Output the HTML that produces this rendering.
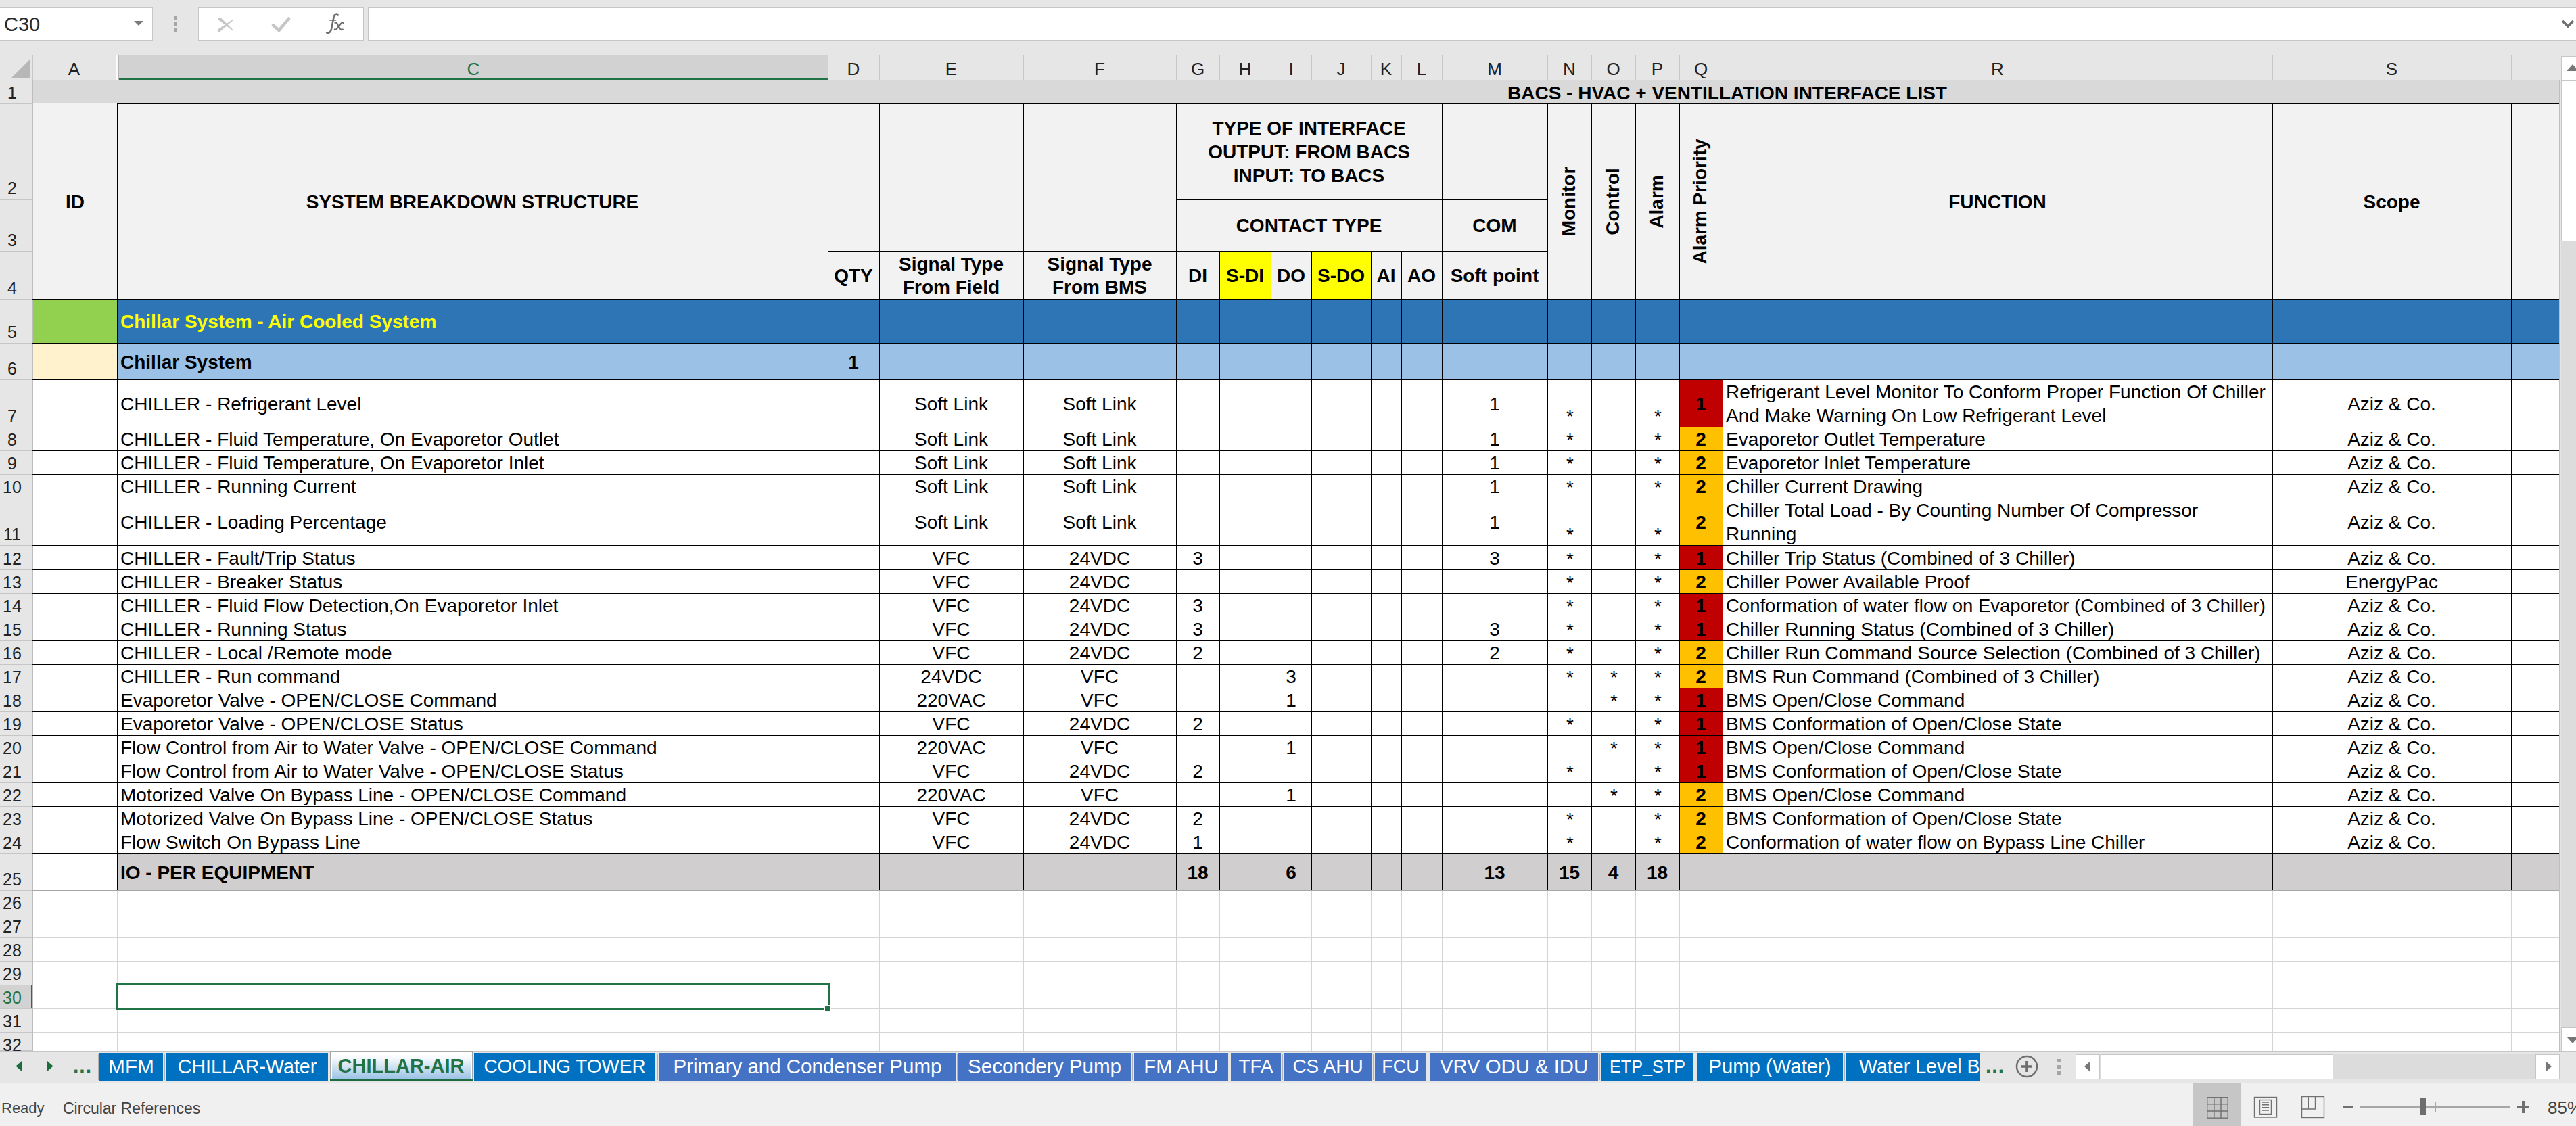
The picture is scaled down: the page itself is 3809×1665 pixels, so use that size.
<!DOCTYPE html><html><head><meta charset="utf-8"><style>
html,body{margin:0;padding:0;}
body{width:3809px;height:1665px;overflow:hidden;position:relative;background:#e6e6e6;font-family:'Liberation Sans', sans-serif;}
</style></head><body>
<div style="position:absolute;left:-1px;top:11px;width:227px;height:49px;background:#fff;border:1px solid #c6c6c6;box-sizing:border-box;"></div>
<div style="position:absolute;left:6px;top:15px;font-family:'Liberation Sans', sans-serif;font-size:29px;line-height:42px;color:#2b2b2b;">C30</div>
<svg style="position:absolute;left:198px;top:31px" width="15" height="8"><path d="M0 0 L14 0 L7 7 Z" fill="#7a7a7a"/></svg>
<div style="position:absolute;left:257px;top:24px;width:5px;height:5px;background:#a6a6a6;"></div>
<div style="position:absolute;left:257px;top:33px;width:5px;height:5px;background:#a6a6a6;"></div>
<div style="position:absolute;left:257px;top:42px;width:5px;height:5px;background:#a6a6a6;"></div>
<div style="position:absolute;left:293px;top:11px;width:245px;height:49px;background:#fff;border:1px solid #c6c6c6;box-sizing:border-box;"></div>
<svg style="position:absolute;left:320px;top:24px" width="30" height="24"><path d="M3.52 5.69 L6.48 2.31 L25.33 21.12 L24.67 21.88 Z M24.7 4.6 L25.3 5.4 L5.36 22.79 L2.64 19.21 Z" fill="#c6c6c6"/><circle cx="5" cy="4" r="2.25" fill="#c6c6c6"/><circle cx="4" cy="21" r="2.25" fill="#c6c6c6"/></svg>
<svg style="position:absolute;left:400px;top:24px" width="32" height="24"><path d="M4 13.5 L12.5 21 L27 3.5" stroke="#c6c6c6" stroke-width="4.6" stroke-linecap="round" stroke-linejoin="miter" fill="none"/></svg>
<svg style="position:absolute;left:480px;top:18px" width="34" height="34"><g fill="none" stroke="#6e6e6e" stroke-linecap="round"><path d="M19.5 3.5 C18 2 15 2.5 13.8 6 L10 25 C9 30 6 31.5 3.2 30.2" stroke-width="2.6"/><path d="M7.8 11.8 H16.5" stroke-width="1.8"/><path d="M15.5 16 C17 15 18 15.5 19 18 L23 24.5 C24 26.5 25.5 26.5 26.8 25.5" stroke-width="2.2"/><path d="M27.5 15.8 C26 14.8 25 15.5 23.5 17.5 L18.5 24 C17.3 25.8 16 26.2 14.8 25.5" stroke-width="2.2"/></g></svg>
<div style="position:absolute;left:544px;top:11px;width:3300px;height:49px;background:#fff;border:1px solid #c6c6c6;box-sizing:border-box;"></div>
<svg style="position:absolute;left:3787px;top:29px" width="20" height="13"><path d="M2 2 L10 10 L18 2" stroke="#6e6e6e" stroke-width="3.5" fill="none"/></svg>
<div style="position:absolute;left:48px;top:118px;width:3736px;height:1436px;background:#fff;"></div>
<div style="position:absolute;left:48px;top:153px;width:3736px;height:1px;background:#d4d4d4;"></div>
<div style="position:absolute;left:48px;top:294px;width:3736px;height:1px;background:#d4d4d4;"></div>
<div style="position:absolute;left:48px;top:371px;width:3736px;height:1px;background:#d4d4d4;"></div>
<div style="position:absolute;left:48px;top:442px;width:3736px;height:1px;background:#d4d4d4;"></div>
<div style="position:absolute;left:48px;top:507px;width:3736px;height:1px;background:#d4d4d4;"></div>
<div style="position:absolute;left:48px;top:561px;width:3736px;height:1px;background:#d4d4d4;"></div>
<div style="position:absolute;left:48px;top:631px;width:3736px;height:1px;background:#d4d4d4;"></div>
<div style="position:absolute;left:48px;top:666px;width:3736px;height:1px;background:#d4d4d4;"></div>
<div style="position:absolute;left:48px;top:701px;width:3736px;height:1px;background:#d4d4d4;"></div>
<div style="position:absolute;left:48px;top:736px;width:3736px;height:1px;background:#d4d4d4;"></div>
<div style="position:absolute;left:48px;top:806px;width:3736px;height:1px;background:#d4d4d4;"></div>
<div style="position:absolute;left:48px;top:842px;width:3736px;height:1px;background:#d4d4d4;"></div>
<div style="position:absolute;left:48px;top:877px;width:3736px;height:1px;background:#d4d4d4;"></div>
<div style="position:absolute;left:48px;top:912px;width:3736px;height:1px;background:#d4d4d4;"></div>
<div style="position:absolute;left:48px;top:947px;width:3736px;height:1px;background:#d4d4d4;"></div>
<div style="position:absolute;left:48px;top:982px;width:3736px;height:1px;background:#d4d4d4;"></div>
<div style="position:absolute;left:48px;top:1017px;width:3736px;height:1px;background:#d4d4d4;"></div>
<div style="position:absolute;left:48px;top:1052px;width:3736px;height:1px;background:#d4d4d4;"></div>
<div style="position:absolute;left:48px;top:1087px;width:3736px;height:1px;background:#d4d4d4;"></div>
<div style="position:absolute;left:48px;top:1122px;width:3736px;height:1px;background:#d4d4d4;"></div>
<div style="position:absolute;left:48px;top:1157px;width:3736px;height:1px;background:#d4d4d4;"></div>
<div style="position:absolute;left:48px;top:1192px;width:3736px;height:1px;background:#d4d4d4;"></div>
<div style="position:absolute;left:48px;top:1227px;width:3736px;height:1px;background:#d4d4d4;"></div>
<div style="position:absolute;left:48px;top:1262px;width:3736px;height:1px;background:#d4d4d4;"></div>
<div style="position:absolute;left:48px;top:1316px;width:3736px;height:1px;background:#d4d4d4;"></div>
<div style="position:absolute;left:48px;top:1351px;width:3736px;height:1px;background:#d4d4d4;"></div>
<div style="position:absolute;left:48px;top:1386px;width:3736px;height:1px;background:#d4d4d4;"></div>
<div style="position:absolute;left:48px;top:1421px;width:3736px;height:1px;background:#d4d4d4;"></div>
<div style="position:absolute;left:48px;top:1456px;width:3736px;height:1px;background:#d4d4d4;"></div>
<div style="position:absolute;left:48px;top:1491px;width:3736px;height:1px;background:#d4d4d4;"></div>
<div style="position:absolute;left:48px;top:1526px;width:3736px;height:1px;background:#d4d4d4;"></div>
<div style="position:absolute;left:48px;top:1561px;width:3736px;height:1px;background:#d4d4d4;"></div>
<div style="position:absolute;left:173px;top:118px;width:1px;height:1436px;background:#d4d4d4;"></div>
<div style="position:absolute;left:1224px;top:118px;width:1px;height:1436px;background:#d4d4d4;"></div>
<div style="position:absolute;left:1300px;top:118px;width:1px;height:1436px;background:#d4d4d4;"></div>
<div style="position:absolute;left:1513px;top:118px;width:1px;height:1436px;background:#d4d4d4;"></div>
<div style="position:absolute;left:1739px;top:118px;width:1px;height:1436px;background:#d4d4d4;"></div>
<div style="position:absolute;left:1803px;top:118px;width:1px;height:1436px;background:#d4d4d4;"></div>
<div style="position:absolute;left:1879px;top:118px;width:1px;height:1436px;background:#d4d4d4;"></div>
<div style="position:absolute;left:1939px;top:118px;width:1px;height:1436px;background:#d4d4d4;"></div>
<div style="position:absolute;left:2027px;top:118px;width:1px;height:1436px;background:#d4d4d4;"></div>
<div style="position:absolute;left:2072px;top:118px;width:1px;height:1436px;background:#d4d4d4;"></div>
<div style="position:absolute;left:2132px;top:118px;width:1px;height:1436px;background:#d4d4d4;"></div>
<div style="position:absolute;left:2288px;top:118px;width:1px;height:1436px;background:#d4d4d4;"></div>
<div style="position:absolute;left:2353px;top:118px;width:1px;height:1436px;background:#d4d4d4;"></div>
<div style="position:absolute;left:2418px;top:118px;width:1px;height:1436px;background:#d4d4d4;"></div>
<div style="position:absolute;left:2483px;top:118px;width:1px;height:1436px;background:#d4d4d4;"></div>
<div style="position:absolute;left:2547px;top:118px;width:1px;height:1436px;background:#d4d4d4;"></div>
<div style="position:absolute;left:3360px;top:118px;width:1px;height:1436px;background:#d4d4d4;"></div>
<div style="position:absolute;left:3713px;top:118px;width:1px;height:1436px;background:#d4d4d4;"></div>
<div style="position:absolute;left:0px;top:82px;width:3784px;height:36px;background:#e6e6e6;"></div>
<svg style="position:absolute;left:16px;top:86px" width="30" height="30"><path d="M29 1 L29 29 L1 29 Z" fill="#b7b7b7"/></svg>
<div style="position:absolute;left:48px;top:82px;width:1px;height:36px;background:#c6c6c6;"></div>
<div style="position:absolute;left:48px;top:84px;width:123px;height:34px;overflow:hidden;text-align:center;font-family:'Liberation Sans', sans-serif;font-size:26px;line-height:36px;color:#222;">A</div>
<div style="position:absolute;left:171px;top:82px;width:1px;height:36px;background:#b4b4b4;"></div>
<div style="position:absolute;left:176px;top:82px;width:1048px;height:36px;background:#d2d2d2;"></div>
<div style="position:absolute;left:176px;top:116px;width:1048px;height:3px;background:#217346;"></div>
<div style="position:absolute;left:176px;top:84px;width:1048px;height:34px;overflow:hidden;text-align:center;font-family:'Liberation Sans', sans-serif;font-size:26px;line-height:36px;color:#217346;">C</div>
<div style="position:absolute;left:1224px;top:82px;width:1px;height:36px;background:#c6c6c6;"></div>
<div style="position:absolute;left:1224px;top:84px;width:76px;height:34px;overflow:hidden;text-align:center;font-family:'Liberation Sans', sans-serif;font-size:26px;line-height:36px;color:#222;">D</div>
<div style="position:absolute;left:1300px;top:82px;width:1px;height:36px;background:#c6c6c6;"></div>
<div style="position:absolute;left:1300px;top:84px;width:213px;height:34px;overflow:hidden;text-align:center;font-family:'Liberation Sans', sans-serif;font-size:26px;line-height:36px;color:#222;">E</div>
<div style="position:absolute;left:1513px;top:82px;width:1px;height:36px;background:#c6c6c6;"></div>
<div style="position:absolute;left:1513px;top:84px;width:226px;height:34px;overflow:hidden;text-align:center;font-family:'Liberation Sans', sans-serif;font-size:26px;line-height:36px;color:#222;">F</div>
<div style="position:absolute;left:1739px;top:82px;width:1px;height:36px;background:#c6c6c6;"></div>
<div style="position:absolute;left:1739px;top:84px;width:64px;height:34px;overflow:hidden;text-align:center;font-family:'Liberation Sans', sans-serif;font-size:26px;line-height:36px;color:#222;">G</div>
<div style="position:absolute;left:1803px;top:82px;width:1px;height:36px;background:#c6c6c6;"></div>
<div style="position:absolute;left:1803px;top:84px;width:76px;height:34px;overflow:hidden;text-align:center;font-family:'Liberation Sans', sans-serif;font-size:26px;line-height:36px;color:#222;">H</div>
<div style="position:absolute;left:1879px;top:82px;width:1px;height:36px;background:#c6c6c6;"></div>
<div style="position:absolute;left:1879px;top:84px;width:60px;height:34px;overflow:hidden;text-align:center;font-family:'Liberation Sans', sans-serif;font-size:26px;line-height:36px;color:#222;">I</div>
<div style="position:absolute;left:1939px;top:82px;width:1px;height:36px;background:#c6c6c6;"></div>
<div style="position:absolute;left:1939px;top:84px;width:88px;height:34px;overflow:hidden;text-align:center;font-family:'Liberation Sans', sans-serif;font-size:26px;line-height:36px;color:#222;">J</div>
<div style="position:absolute;left:2027px;top:82px;width:1px;height:36px;background:#c6c6c6;"></div>
<div style="position:absolute;left:2027px;top:84px;width:45px;height:34px;overflow:hidden;text-align:center;font-family:'Liberation Sans', sans-serif;font-size:26px;line-height:36px;color:#222;">K</div>
<div style="position:absolute;left:2072px;top:82px;width:1px;height:36px;background:#c6c6c6;"></div>
<div style="position:absolute;left:2072px;top:84px;width:60px;height:34px;overflow:hidden;text-align:center;font-family:'Liberation Sans', sans-serif;font-size:26px;line-height:36px;color:#222;">L</div>
<div style="position:absolute;left:2132px;top:82px;width:1px;height:36px;background:#c6c6c6;"></div>
<div style="position:absolute;left:2132px;top:84px;width:156px;height:34px;overflow:hidden;text-align:center;font-family:'Liberation Sans', sans-serif;font-size:26px;line-height:36px;color:#222;">M</div>
<div style="position:absolute;left:2288px;top:82px;width:1px;height:36px;background:#c6c6c6;"></div>
<div style="position:absolute;left:2288px;top:84px;width:65px;height:34px;overflow:hidden;text-align:center;font-family:'Liberation Sans', sans-serif;font-size:26px;line-height:36px;color:#222;">N</div>
<div style="position:absolute;left:2353px;top:82px;width:1px;height:36px;background:#c6c6c6;"></div>
<div style="position:absolute;left:2353px;top:84px;width:65px;height:34px;overflow:hidden;text-align:center;font-family:'Liberation Sans', sans-serif;font-size:26px;line-height:36px;color:#222;">O</div>
<div style="position:absolute;left:2418px;top:82px;width:1px;height:36px;background:#c6c6c6;"></div>
<div style="position:absolute;left:2418px;top:84px;width:65px;height:34px;overflow:hidden;text-align:center;font-family:'Liberation Sans', sans-serif;font-size:26px;line-height:36px;color:#222;">P</div>
<div style="position:absolute;left:2483px;top:82px;width:1px;height:36px;background:#c6c6c6;"></div>
<div style="position:absolute;left:2483px;top:84px;width:64px;height:34px;overflow:hidden;text-align:center;font-family:'Liberation Sans', sans-serif;font-size:26px;line-height:36px;color:#222;">Q</div>
<div style="position:absolute;left:2547px;top:82px;width:1px;height:36px;background:#c6c6c6;"></div>
<div style="position:absolute;left:2547px;top:84px;width:813px;height:34px;overflow:hidden;text-align:center;font-family:'Liberation Sans', sans-serif;font-size:26px;line-height:36px;color:#222;">R</div>
<div style="position:absolute;left:3360px;top:82px;width:1px;height:36px;background:#c6c6c6;"></div>
<div style="position:absolute;left:3360px;top:84px;width:353px;height:34px;overflow:hidden;text-align:center;font-family:'Liberation Sans', sans-serif;font-size:26px;line-height:36px;color:#222;">S</div>
<div style="position:absolute;left:3713px;top:82px;width:1px;height:36px;background:#c6c6c6;"></div>
<div style="position:absolute;left:3713px;top:84px;width:71px;height:34px;overflow:hidden;text-align:center;font-family:'Liberation Sans', sans-serif;font-size:26px;line-height:36px;color:#222;"></div>
<div style="position:absolute;left:3784px;top:82px;width:1px;height:36px;background:#c6c6c6;"></div>
<div style="position:absolute;left:172px;top:82px;width:3px;height:36px;background:#fafafa;"></div>
<div style="position:absolute;left:175px;top:82px;width:1px;height:36px;background:#b4b4b4;"></div>
<div style="position:absolute;left:48px;top:118px;width:3736px;height:1px;background:#ababab;"></div>
<div style="position:absolute;left:176px;top:116px;width:1048px;height:3px;background:#217346;"></div>
<div style="position:absolute;left:0px;top:118px;width:48px;height:1436px;background:#e6e6e6;"></div>
<div style="position:absolute;left:0px;top:153px;width:48px;height:1px;background:#c6c6c6;"></div>
<div style="position:absolute;left:0px;top:119px;width:36px;height:36px;text-align:center;font-family:'Liberation Sans', sans-serif;font-size:25px;line-height:36px;color:#222;">1</div>
<div style="position:absolute;left:0px;top:294px;width:48px;height:1px;background:#c6c6c6;"></div>
<div style="position:absolute;left:0px;top:260px;width:36px;height:36px;text-align:center;font-family:'Liberation Sans', sans-serif;font-size:25px;line-height:36px;color:#222;">2</div>
<div style="position:absolute;left:0px;top:371px;width:48px;height:1px;background:#c6c6c6;"></div>
<div style="position:absolute;left:0px;top:337px;width:36px;height:36px;text-align:center;font-family:'Liberation Sans', sans-serif;font-size:25px;line-height:36px;color:#222;">3</div>
<div style="position:absolute;left:0px;top:442px;width:48px;height:1px;background:#c6c6c6;"></div>
<div style="position:absolute;left:0px;top:408px;width:36px;height:36px;text-align:center;font-family:'Liberation Sans', sans-serif;font-size:25px;line-height:36px;color:#222;">4</div>
<div style="position:absolute;left:0px;top:507px;width:48px;height:1px;background:#c6c6c6;"></div>
<div style="position:absolute;left:0px;top:473px;width:36px;height:36px;text-align:center;font-family:'Liberation Sans', sans-serif;font-size:25px;line-height:36px;color:#222;">5</div>
<div style="position:absolute;left:0px;top:561px;width:48px;height:1px;background:#c6c6c6;"></div>
<div style="position:absolute;left:0px;top:527px;width:36px;height:36px;text-align:center;font-family:'Liberation Sans', sans-serif;font-size:25px;line-height:36px;color:#222;">6</div>
<div style="position:absolute;left:0px;top:631px;width:48px;height:1px;background:#c6c6c6;"></div>
<div style="position:absolute;left:0px;top:597px;width:36px;height:36px;text-align:center;font-family:'Liberation Sans', sans-serif;font-size:25px;line-height:36px;color:#222;">7</div>
<div style="position:absolute;left:0px;top:666px;width:48px;height:1px;background:#c6c6c6;"></div>
<div style="position:absolute;left:0px;top:632px;width:36px;height:36px;text-align:center;font-family:'Liberation Sans', sans-serif;font-size:25px;line-height:36px;color:#222;">8</div>
<div style="position:absolute;left:0px;top:701px;width:48px;height:1px;background:#c6c6c6;"></div>
<div style="position:absolute;left:0px;top:667px;width:36px;height:36px;text-align:center;font-family:'Liberation Sans', sans-serif;font-size:25px;line-height:36px;color:#222;">9</div>
<div style="position:absolute;left:0px;top:736px;width:48px;height:1px;background:#c6c6c6;"></div>
<div style="position:absolute;left:0px;top:702px;width:36px;height:36px;text-align:center;font-family:'Liberation Sans', sans-serif;font-size:25px;line-height:36px;color:#222;">10</div>
<div style="position:absolute;left:0px;top:806px;width:48px;height:1px;background:#c6c6c6;"></div>
<div style="position:absolute;left:0px;top:772px;width:36px;height:36px;text-align:center;font-family:'Liberation Sans', sans-serif;font-size:25px;line-height:36px;color:#222;">11</div>
<div style="position:absolute;left:0px;top:842px;width:48px;height:1px;background:#c6c6c6;"></div>
<div style="position:absolute;left:0px;top:808px;width:36px;height:36px;text-align:center;font-family:'Liberation Sans', sans-serif;font-size:25px;line-height:36px;color:#222;">12</div>
<div style="position:absolute;left:0px;top:877px;width:48px;height:1px;background:#c6c6c6;"></div>
<div style="position:absolute;left:0px;top:843px;width:36px;height:36px;text-align:center;font-family:'Liberation Sans', sans-serif;font-size:25px;line-height:36px;color:#222;">13</div>
<div style="position:absolute;left:0px;top:912px;width:48px;height:1px;background:#c6c6c6;"></div>
<div style="position:absolute;left:0px;top:878px;width:36px;height:36px;text-align:center;font-family:'Liberation Sans', sans-serif;font-size:25px;line-height:36px;color:#222;">14</div>
<div style="position:absolute;left:0px;top:947px;width:48px;height:1px;background:#c6c6c6;"></div>
<div style="position:absolute;left:0px;top:913px;width:36px;height:36px;text-align:center;font-family:'Liberation Sans', sans-serif;font-size:25px;line-height:36px;color:#222;">15</div>
<div style="position:absolute;left:0px;top:982px;width:48px;height:1px;background:#c6c6c6;"></div>
<div style="position:absolute;left:0px;top:948px;width:36px;height:36px;text-align:center;font-family:'Liberation Sans', sans-serif;font-size:25px;line-height:36px;color:#222;">16</div>
<div style="position:absolute;left:0px;top:1017px;width:48px;height:1px;background:#c6c6c6;"></div>
<div style="position:absolute;left:0px;top:983px;width:36px;height:36px;text-align:center;font-family:'Liberation Sans', sans-serif;font-size:25px;line-height:36px;color:#222;">17</div>
<div style="position:absolute;left:0px;top:1052px;width:48px;height:1px;background:#c6c6c6;"></div>
<div style="position:absolute;left:0px;top:1018px;width:36px;height:36px;text-align:center;font-family:'Liberation Sans', sans-serif;font-size:25px;line-height:36px;color:#222;">18</div>
<div style="position:absolute;left:0px;top:1087px;width:48px;height:1px;background:#c6c6c6;"></div>
<div style="position:absolute;left:0px;top:1053px;width:36px;height:36px;text-align:center;font-family:'Liberation Sans', sans-serif;font-size:25px;line-height:36px;color:#222;">19</div>
<div style="position:absolute;left:0px;top:1122px;width:48px;height:1px;background:#c6c6c6;"></div>
<div style="position:absolute;left:0px;top:1088px;width:36px;height:36px;text-align:center;font-family:'Liberation Sans', sans-serif;font-size:25px;line-height:36px;color:#222;">20</div>
<div style="position:absolute;left:0px;top:1157px;width:48px;height:1px;background:#c6c6c6;"></div>
<div style="position:absolute;left:0px;top:1123px;width:36px;height:36px;text-align:center;font-family:'Liberation Sans', sans-serif;font-size:25px;line-height:36px;color:#222;">21</div>
<div style="position:absolute;left:0px;top:1192px;width:48px;height:1px;background:#c6c6c6;"></div>
<div style="position:absolute;left:0px;top:1158px;width:36px;height:36px;text-align:center;font-family:'Liberation Sans', sans-serif;font-size:25px;line-height:36px;color:#222;">22</div>
<div style="position:absolute;left:0px;top:1227px;width:48px;height:1px;background:#c6c6c6;"></div>
<div style="position:absolute;left:0px;top:1193px;width:36px;height:36px;text-align:center;font-family:'Liberation Sans', sans-serif;font-size:25px;line-height:36px;color:#222;">23</div>
<div style="position:absolute;left:0px;top:1262px;width:48px;height:1px;background:#c6c6c6;"></div>
<div style="position:absolute;left:0px;top:1228px;width:36px;height:36px;text-align:center;font-family:'Liberation Sans', sans-serif;font-size:25px;line-height:36px;color:#222;">24</div>
<div style="position:absolute;left:0px;top:1316px;width:48px;height:1px;background:#c6c6c6;"></div>
<div style="position:absolute;left:0px;top:1282px;width:36px;height:36px;text-align:center;font-family:'Liberation Sans', sans-serif;font-size:25px;line-height:36px;color:#222;">25</div>
<div style="position:absolute;left:0px;top:1351px;width:48px;height:1px;background:#c6c6c6;"></div>
<div style="position:absolute;left:0px;top:1317px;width:36px;height:36px;text-align:center;font-family:'Liberation Sans', sans-serif;font-size:25px;line-height:36px;color:#222;">26</div>
<div style="position:absolute;left:0px;top:1386px;width:48px;height:1px;background:#c6c6c6;"></div>
<div style="position:absolute;left:0px;top:1352px;width:36px;height:36px;text-align:center;font-family:'Liberation Sans', sans-serif;font-size:25px;line-height:36px;color:#222;">27</div>
<div style="position:absolute;left:0px;top:1421px;width:48px;height:1px;background:#c6c6c6;"></div>
<div style="position:absolute;left:0px;top:1387px;width:36px;height:36px;text-align:center;font-family:'Liberation Sans', sans-serif;font-size:25px;line-height:36px;color:#222;">28</div>
<div style="position:absolute;left:0px;top:1456px;width:48px;height:1px;background:#c6c6c6;"></div>
<div style="position:absolute;left:0px;top:1422px;width:36px;height:36px;text-align:center;font-family:'Liberation Sans', sans-serif;font-size:25px;line-height:36px;color:#222;">29</div>
<div style="position:absolute;left:0px;top:1456px;width:48px;height:35px;background:#d2d2d2;"></div>
<div style="position:absolute;left:46px;top:1456px;width:3px;height:35px;background:#217346;"></div>
<div style="position:absolute;left:0px;top:1491px;width:48px;height:1px;background:#c6c6c6;"></div>
<div style="position:absolute;left:0px;top:1457px;width:36px;height:36px;text-align:center;font-family:'Liberation Sans', sans-serif;font-size:25px;line-height:36px;color:#217346;">30</div>
<div style="position:absolute;left:0px;top:1526px;width:48px;height:1px;background:#c6c6c6;"></div>
<div style="position:absolute;left:0px;top:1492px;width:36px;height:36px;text-align:center;font-family:'Liberation Sans', sans-serif;font-size:25px;line-height:36px;color:#222;">31</div>
<div style="position:absolute;left:0px;top:1553px;width:48px;height:1px;background:#c6c6c6;"></div>
<div style="position:absolute;left:0px;top:1527px;width:36px;height:36px;text-align:center;font-family:'Liberation Sans', sans-serif;font-size:25px;line-height:36px;color:#222;">32</div>
<div style="position:absolute;left:48px;top:118px;width:1px;height:1436px;background:#bdbdbd;"></div>
<div style="position:absolute;left:49px;top:119px;width:3735px;height:34px;background:#d9d9d9;"></div>
<div style="position:absolute;left:3713px;top:119px;width:71px;height:34px;background:#d9d9d9;"></div>
<div style="position:absolute;left:49px;top:153px;width:3735px;height:289px;background:#f2f2f2;"></div>
<div style="position:absolute;left:1803px;top:371px;width:76px;height:71px;background:#ffff00;"></div>
<div style="position:absolute;left:1939px;top:371px;width:88px;height:71px;background:#ffff00;"></div>
<div style="position:absolute;left:49px;top:442px;width:124px;height:65px;background:#92d050;"></div>
<div style="position:absolute;left:173px;top:442px;width:3611px;height:65px;background:#2e75b6;"></div>
<div style="position:absolute;left:49px;top:507px;width:124px;height:54px;background:#fff2cc;"></div>
<div style="position:absolute;left:173px;top:507px;width:3611px;height:54px;background:#9bc2e6;"></div>
<div style="position:absolute;left:173px;top:1262px;width:3611px;height:54px;background:#d0cece;"></div>
<div style="position:absolute;left:2483px;top:561px;width:64px;height:70px;background:#c00000;"></div>
<div style="position:absolute;left:2483px;top:631px;width:64px;height:35px;background:#ffc000;"></div>
<div style="position:absolute;left:2483px;top:666px;width:64px;height:35px;background:#ffc000;"></div>
<div style="position:absolute;left:2483px;top:701px;width:64px;height:35px;background:#ffc000;"></div>
<div style="position:absolute;left:2483px;top:736px;width:64px;height:70px;background:#ffc000;"></div>
<div style="position:absolute;left:2483px;top:806px;width:64px;height:36px;background:#c00000;"></div>
<div style="position:absolute;left:2483px;top:842px;width:64px;height:35px;background:#ffc000;"></div>
<div style="position:absolute;left:2483px;top:877px;width:64px;height:35px;background:#c00000;"></div>
<div style="position:absolute;left:2483px;top:912px;width:64px;height:35px;background:#c00000;"></div>
<div style="position:absolute;left:2483px;top:947px;width:64px;height:35px;background:#ffc000;"></div>
<div style="position:absolute;left:2483px;top:982px;width:64px;height:35px;background:#ffc000;"></div>
<div style="position:absolute;left:2483px;top:1017px;width:64px;height:35px;background:#c00000;"></div>
<div style="position:absolute;left:2483px;top:1052px;width:64px;height:35px;background:#c00000;"></div>
<div style="position:absolute;left:2483px;top:1087px;width:64px;height:35px;background:#c00000;"></div>
<div style="position:absolute;left:2483px;top:1122px;width:64px;height:35px;background:#c00000;"></div>
<div style="position:absolute;left:2483px;top:1157px;width:64px;height:35px;background:#ffc000;"></div>
<div style="position:absolute;left:2483px;top:1192px;width:64px;height:35px;background:#ffc000;"></div>
<div style="position:absolute;left:2483px;top:1227px;width:64px;height:35px;background:#ffc000;"></div>
<div style="position:absolute;left:173px;top:153px;width:3611px;height:1px;background:#000;"></div>
<div style="position:absolute;left:173px;top:442px;width:3611px;height:1px;background:#000;"></div>
<div style="position:absolute;left:1224px;top:371px;width:515px;height:1px;background:#000;"></div>
<div style="position:absolute;left:1739px;top:294px;width:549px;height:1px;background:#000;"></div>
<div style="position:absolute;left:1739px;top:371px;width:549px;height:1px;background:#000;"></div>
<div style="position:absolute;left:173px;top:507px;width:3611px;height:1px;background:#000;"></div>
<div style="position:absolute;left:173px;top:561px;width:3611px;height:1px;background:#000;"></div>
<div style="position:absolute;left:173px;top:631px;width:3611px;height:1px;background:#000;"></div>
<div style="position:absolute;left:173px;top:666px;width:3611px;height:1px;background:#000;"></div>
<div style="position:absolute;left:173px;top:701px;width:3611px;height:1px;background:#000;"></div>
<div style="position:absolute;left:173px;top:736px;width:3611px;height:1px;background:#000;"></div>
<div style="position:absolute;left:173px;top:806px;width:3611px;height:1px;background:#000;"></div>
<div style="position:absolute;left:173px;top:842px;width:3611px;height:1px;background:#000;"></div>
<div style="position:absolute;left:173px;top:877px;width:3611px;height:1px;background:#000;"></div>
<div style="position:absolute;left:173px;top:912px;width:3611px;height:1px;background:#000;"></div>
<div style="position:absolute;left:173px;top:947px;width:3611px;height:1px;background:#000;"></div>
<div style="position:absolute;left:173px;top:982px;width:3611px;height:1px;background:#000;"></div>
<div style="position:absolute;left:173px;top:1017px;width:3611px;height:1px;background:#000;"></div>
<div style="position:absolute;left:173px;top:1052px;width:3611px;height:1px;background:#000;"></div>
<div style="position:absolute;left:173px;top:1087px;width:3611px;height:1px;background:#000;"></div>
<div style="position:absolute;left:173px;top:1122px;width:3611px;height:1px;background:#000;"></div>
<div style="position:absolute;left:173px;top:1157px;width:3611px;height:1px;background:#000;"></div>
<div style="position:absolute;left:173px;top:1192px;width:3611px;height:1px;background:#000;"></div>
<div style="position:absolute;left:173px;top:1227px;width:3611px;height:1px;background:#000;"></div>
<div style="position:absolute;left:173px;top:1262px;width:3611px;height:1px;background:#000;"></div>
<div style="position:absolute;left:48px;top:442px;width:125px;height:1px;background:#000;"></div>
<div style="position:absolute;left:48px;top:507px;width:125px;height:1px;background:#000;"></div>
<div style="position:absolute;left:48px;top:561px;width:125px;height:1px;background:#000;"></div>
<div style="position:absolute;left:48px;top:631px;width:125px;height:1px;background:#000;"></div>
<div style="position:absolute;left:48px;top:666px;width:125px;height:1px;background:#000;"></div>
<div style="position:absolute;left:48px;top:701px;width:125px;height:1px;background:#000;"></div>
<div style="position:absolute;left:48px;top:736px;width:125px;height:1px;background:#000;"></div>
<div style="position:absolute;left:48px;top:806px;width:125px;height:1px;background:#000;"></div>
<div style="position:absolute;left:48px;top:842px;width:125px;height:1px;background:#000;"></div>
<div style="position:absolute;left:48px;top:877px;width:125px;height:1px;background:#000;"></div>
<div style="position:absolute;left:48px;top:912px;width:125px;height:1px;background:#000;"></div>
<div style="position:absolute;left:48px;top:947px;width:125px;height:1px;background:#000;"></div>
<div style="position:absolute;left:48px;top:982px;width:125px;height:1px;background:#000;"></div>
<div style="position:absolute;left:48px;top:1017px;width:125px;height:1px;background:#000;"></div>
<div style="position:absolute;left:48px;top:1052px;width:125px;height:1px;background:#000;"></div>
<div style="position:absolute;left:48px;top:1087px;width:125px;height:1px;background:#000;"></div>
<div style="position:absolute;left:48px;top:1122px;width:125px;height:1px;background:#000;"></div>
<div style="position:absolute;left:48px;top:1157px;width:125px;height:1px;background:#000;"></div>
<div style="position:absolute;left:48px;top:1192px;width:125px;height:1px;background:#000;"></div>
<div style="position:absolute;left:48px;top:1227px;width:125px;height:1px;background:#000;"></div>
<div style="position:absolute;left:48px;top:1262px;width:125px;height:1px;background:#000;"></div>
<div style="position:absolute;left:48px;top:1316px;width:3736px;height:1px;background:#a6a6a6;"></div>
<div style="position:absolute;left:173px;top:153px;width:1px;height:1163px;background:#000;"></div>
<div style="position:absolute;left:1224px;top:153px;width:1px;height:1163px;background:#000;"></div>
<div style="position:absolute;left:1300px;top:153px;width:1px;height:1163px;background:#000;"></div>
<div style="position:absolute;left:1513px;top:153px;width:1px;height:1163px;background:#000;"></div>
<div style="position:absolute;left:1739px;top:153px;width:1px;height:1163px;background:#000;"></div>
<div style="position:absolute;left:2132px;top:153px;width:1px;height:1163px;background:#000;"></div>
<div style="position:absolute;left:2288px;top:153px;width:1px;height:1163px;background:#000;"></div>
<div style="position:absolute;left:2353px;top:153px;width:1px;height:1163px;background:#000;"></div>
<div style="position:absolute;left:2418px;top:153px;width:1px;height:1163px;background:#000;"></div>
<div style="position:absolute;left:2483px;top:153px;width:1px;height:1163px;background:#000;"></div>
<div style="position:absolute;left:2547px;top:153px;width:1px;height:1163px;background:#000;"></div>
<div style="position:absolute;left:3360px;top:153px;width:1px;height:1163px;background:#000;"></div>
<div style="position:absolute;left:3713px;top:153px;width:1px;height:1163px;background:#000;"></div>
<div style="position:absolute;left:1803px;top:371px;width:1px;height:945px;background:#000;"></div>
<div style="position:absolute;left:1879px;top:371px;width:1px;height:945px;background:#000;"></div>
<div style="position:absolute;left:1939px;top:371px;width:1px;height:945px;background:#000;"></div>
<div style="position:absolute;left:2027px;top:371px;width:1px;height:945px;background:#000;"></div>
<div style="position:absolute;left:2072px;top:371px;width:1px;height:945px;background:#000;"></div>
<div style="position:absolute;left:2054px;top:119px;width:1000px;height:35px;display:flex;justify-content:center;align-items:center;box-sizing:border-box;padding:0 0px;"><span style="font-family:'Liberation Sans', sans-serif;font-size:28px;line-height:35px;font-weight:bold;color:#000;text-align:center;white-space:pre;position:relative;top:1px;">BACS - HVAC + VENTILLATION INTERFACE LIST</span></div>
<div style="position:absolute;left:49px;top:153px;width:124px;height:289px;display:flex;justify-content:center;align-items:center;box-sizing:border-box;padding:0 5px;"><span style="font-family:'Liberation Sans', sans-serif;font-size:28px;line-height:35px;font-weight:bold;color:#000;text-align:center;white-space:pre;position:relative;top:1px;">ID</span></div>
<div style="position:absolute;left:173px;top:153px;width:1051px;height:289px;display:flex;justify-content:center;align-items:center;box-sizing:border-box;padding:0 5px;"><span style="font-family:'Liberation Sans', sans-serif;font-size:28px;line-height:35px;font-weight:bold;color:#000;text-align:center;white-space:pre;position:relative;top:1px;">SYSTEM BREAKDOWN STRUCTURE</span></div>
<div style="position:absolute;left:1224px;top:371px;width:76px;height:71px;display:flex;justify-content:center;align-items:center;box-sizing:border-box;padding:0 5px;"><span style="font-family:'Liberation Sans', sans-serif;font-size:28px;line-height:35px;font-weight:bold;color:#000;text-align:center;white-space:pre;position:relative;top:1px;">QTY</span></div>
<div style="position:absolute;left:1300px;top:371px;width:213px;height:71px;display:flex;justify-content:center;align-items:center;box-sizing:border-box;padding:0 5px;"><span style="font-family:'Liberation Sans', sans-serif;font-size:28px;line-height:34px;font-weight:bold;color:#000;text-align:center;white-space:pre;position:relative;top:1px;">Signal Type
From Field</span></div>
<div style="position:absolute;left:1513px;top:371px;width:226px;height:71px;display:flex;justify-content:center;align-items:center;box-sizing:border-box;padding:0 5px;"><span style="font-family:'Liberation Sans', sans-serif;font-size:28px;line-height:34px;font-weight:bold;color:#000;text-align:center;white-space:pre;position:relative;top:1px;">Signal Type
From BMS</span></div>
<div style="position:absolute;left:1739px;top:153px;width:393px;height:141px;display:flex;justify-content:center;align-items:center;box-sizing:border-box;padding:0 5px;"><span style="font-family:'Liberation Sans', sans-serif;font-size:28px;line-height:35px;font-weight:bold;color:#000;text-align:center;white-space:pre;position:relative;top:1px;">TYPE OF INTERFACE
OUTPUT: FROM BACS
INPUT: TO BACS</span></div>
<div style="position:absolute;left:1739px;top:294px;width:393px;height:77px;display:flex;justify-content:center;align-items:center;box-sizing:border-box;padding:0 5px;"><span style="font-family:'Liberation Sans', sans-serif;font-size:28px;line-height:35px;font-weight:bold;color:#000;text-align:center;white-space:pre;position:relative;top:1px;">CONTACT TYPE</span></div>
<div style="position:absolute;left:2132px;top:294px;width:156px;height:77px;display:flex;justify-content:center;align-items:center;box-sizing:border-box;padding:0 5px;"><span style="font-family:'Liberation Sans', sans-serif;font-size:28px;line-height:35px;font-weight:bold;color:#000;text-align:center;white-space:pre;position:relative;top:1px;">COM</span></div>
<div style="position:absolute;left:1739px;top:371px;width:64px;height:71px;display:flex;justify-content:center;align-items:center;box-sizing:border-box;padding:0 0px;"><span style="font-family:'Liberation Sans', sans-serif;font-size:28px;line-height:35px;font-weight:bold;color:#000;text-align:center;white-space:pre;position:relative;top:1px;">DI</span></div>
<div style="position:absolute;left:1803px;top:371px;width:76px;height:71px;display:flex;justify-content:center;align-items:center;box-sizing:border-box;padding:0 0px;"><span style="font-family:'Liberation Sans', sans-serif;font-size:28px;line-height:35px;font-weight:bold;color:#000;text-align:center;white-space:pre;position:relative;top:1px;">S-DI</span></div>
<div style="position:absolute;left:1879px;top:371px;width:60px;height:71px;display:flex;justify-content:center;align-items:center;box-sizing:border-box;padding:0 0px;"><span style="font-family:'Liberation Sans', sans-serif;font-size:28px;line-height:35px;font-weight:bold;color:#000;text-align:center;white-space:pre;position:relative;top:1px;">DO</span></div>
<div style="position:absolute;left:1939px;top:371px;width:88px;height:71px;display:flex;justify-content:center;align-items:center;box-sizing:border-box;padding:0 0px;"><span style="font-family:'Liberation Sans', sans-serif;font-size:28px;line-height:35px;font-weight:bold;color:#000;text-align:center;white-space:pre;position:relative;top:1px;">S-DO</span></div>
<div style="position:absolute;left:2027px;top:371px;width:45px;height:71px;display:flex;justify-content:center;align-items:center;box-sizing:border-box;padding:0 0px;"><span style="font-family:'Liberation Sans', sans-serif;font-size:28px;line-height:35px;font-weight:bold;color:#000;text-align:center;white-space:pre;position:relative;top:1px;">AI</span></div>
<div style="position:absolute;left:2072px;top:371px;width:60px;height:71px;display:flex;justify-content:center;align-items:center;box-sizing:border-box;padding:0 0px;"><span style="font-family:'Liberation Sans', sans-serif;font-size:28px;line-height:35px;font-weight:bold;color:#000;text-align:center;white-space:pre;position:relative;top:1px;">AO</span></div>
<div style="position:absolute;left:2132px;top:371px;width:156px;height:71px;display:flex;justify-content:center;align-items:center;box-sizing:border-box;padding:0 0px;"><span style="font-family:'Liberation Sans', sans-serif;font-size:28px;line-height:35px;font-weight:bold;color:#000;text-align:center;white-space:pre;position:relative;top:1px;">Soft point</span></div>
<div style="position:absolute;left:2547px;top:153px;width:813px;height:289px;display:flex;justify-content:center;align-items:center;box-sizing:border-box;padding:0 5px;"><span style="font-family:'Liberation Sans', sans-serif;font-size:28px;line-height:35px;font-weight:bold;color:#000;text-align:center;white-space:pre;position:relative;top:1px;">FUNCTION</span></div>
<div style="position:absolute;left:3360px;top:153px;width:353px;height:289px;display:flex;justify-content:center;align-items:center;box-sizing:border-box;padding:0 5px;"><span style="font-family:'Liberation Sans', sans-serif;font-size:28px;line-height:35px;font-weight:bold;color:#000;text-align:center;white-space:pre;position:relative;top:1px;">Scope</span></div>
<div style="position:absolute;left:2170.5px;top:277.5px;width:300px;height:40px;display:flex;justify-content:center;align-items:center;transform:rotate(-90deg);"><span style="font-family:'Liberation Sans', sans-serif;font-size:28px;line-height:40px;font-weight:bold;color:#000;white-space:pre;position:relative;top:-1.5px">Monitor</span></div>
<div style="position:absolute;left:2235.5px;top:277.5px;width:300px;height:40px;display:flex;justify-content:center;align-items:center;transform:rotate(-90deg);"><span style="font-family:'Liberation Sans', sans-serif;font-size:28px;line-height:40px;font-weight:bold;color:#000;white-space:pre;position:relative;top:-1.5px">Control</span></div>
<div style="position:absolute;left:2300.5px;top:277.5px;width:300px;height:40px;display:flex;justify-content:center;align-items:center;transform:rotate(-90deg);"><span style="font-family:'Liberation Sans', sans-serif;font-size:28px;line-height:40px;font-weight:bold;color:#000;white-space:pre;position:relative;top:-1.5px">Alarm</span></div>
<div style="position:absolute;left:2365.0px;top:277.5px;width:300px;height:40px;display:flex;justify-content:center;align-items:center;transform:rotate(-90deg);"><span style="font-family:'Liberation Sans', sans-serif;font-size:28px;line-height:40px;font-weight:bold;color:#000;white-space:pre;position:relative;top:-1.5px">Alarm Priority</span></div>
<div style="position:absolute;left:173px;top:442px;width:3611px;height:65px;display:flex;justify-content:flex-start;align-items:center;box-sizing:border-box;padding:0 5px;"><span style="font-family:'Liberation Sans', sans-serif;font-size:28px;line-height:35px;font-weight:bold;color:#ffff00;text-align:left;white-space:pre;position:relative;top:1px;">Chillar System - Air Cooled System</span></div>
<div style="position:absolute;left:173px;top:507px;width:1051px;height:54px;display:flex;justify-content:flex-start;align-items:center;box-sizing:border-box;padding:0 5px;"><span style="font-family:'Liberation Sans', sans-serif;font-size:28px;line-height:35px;font-weight:bold;color:#000;text-align:left;white-space:pre;position:relative;top:1px;">Chillar System</span></div>
<div style="position:absolute;left:1224px;top:507px;width:76px;height:54px;display:flex;justify-content:center;align-items:center;box-sizing:border-box;padding:0 0px;"><span style="font-family:'Liberation Sans', sans-serif;font-size:28px;line-height:35px;font-weight:bold;color:#000;text-align:center;white-space:pre;position:relative;top:1px;">1</span></div>
<div style="position:absolute;left:173px;top:561px;width:1051px;height:70px;display:flex;justify-content:flex-start;align-items:center;box-sizing:border-box;padding:0 5px;"><span style="font-family:'Liberation Sans', sans-serif;font-size:28px;line-height:35px;font-weight:normal;color:#000;text-align:left;white-space:pre;position:relative;top:1px;">CHILLER - Refrigerant Level</span></div>
<div style="position:absolute;left:1300px;top:561px;width:213px;height:70px;display:flex;justify-content:center;align-items:center;box-sizing:border-box;padding:0 0px;"><span style="font-family:'Liberation Sans', sans-serif;font-size:28px;line-height:35px;font-weight:normal;color:#000;text-align:center;white-space:pre;position:relative;top:1px;">Soft Link</span></div>
<div style="position:absolute;left:1513px;top:561px;width:226px;height:70px;display:flex;justify-content:center;align-items:center;box-sizing:border-box;padding:0 0px;"><span style="font-family:'Liberation Sans', sans-serif;font-size:28px;line-height:35px;font-weight:normal;color:#000;text-align:center;white-space:pre;position:relative;top:1px;">Soft Link</span></div>
<div style="position:absolute;left:2132px;top:561px;width:156px;height:70px;display:flex;justify-content:center;align-items:center;box-sizing:border-box;padding:0 0px;"><span style="font-family:'Liberation Sans', sans-serif;font-size:28px;line-height:35px;font-weight:normal;color:#000;text-align:center;white-space:pre;position:relative;top:1px;">1</span></div>
<div style="position:absolute;left:2288px;top:561px;width:65px;height:70px;display:flex;justify-content:center;align-items:flex-end;box-sizing:border-box;padding:0 0px;"><span style="font-family:'Liberation Sans', sans-serif;font-size:28px;line-height:35px;font-weight:normal;color:#000;text-align:center;white-space:pre;position:relative;top:1px;top:1.5px;left:1px;">*</span></div>
<div style="position:absolute;left:2418px;top:561px;width:65px;height:70px;display:flex;justify-content:center;align-items:flex-end;box-sizing:border-box;padding:0 0px;"><span style="font-family:'Liberation Sans', sans-serif;font-size:28px;line-height:35px;font-weight:normal;color:#000;text-align:center;white-space:pre;position:relative;top:1px;top:1.5px;left:1px;">*</span></div>
<div style="position:absolute;left:2483px;top:561px;width:64px;height:70px;display:flex;justify-content:center;align-items:center;box-sizing:border-box;padding:0 0px;"><span style="font-family:'Liberation Sans', sans-serif;font-size:28px;line-height:35px;font-weight:bold;color:#000;text-align:center;white-space:pre;position:relative;top:1px;">1</span></div>
<div style="position:absolute;left:2547px;top:561px;width:813px;height:70px;display:flex;justify-content:flex-start;align-items:center;box-sizing:border-box;padding:0 5px;"><span style="font-family:'Liberation Sans', sans-serif;font-size:28px;line-height:35px;font-weight:normal;color:#000;text-align:left;white-space:pre;position:relative;top:1px;">Refrigerant Level Monitor To Conform Proper Function Of Chiller
And Make Warning On Low Refrigerant Level</span></div>
<div style="position:absolute;left:3360px;top:561px;width:353px;height:70px;display:flex;justify-content:center;align-items:center;box-sizing:border-box;padding:0 0px;"><span style="font-family:'Liberation Sans', sans-serif;font-size:28px;line-height:35px;font-weight:normal;color:#000;text-align:center;white-space:pre;position:relative;top:1px;">Aziz &amp; Co.</span></div>
<div style="position:absolute;left:173px;top:631px;width:1051px;height:35px;display:flex;justify-content:flex-start;align-items:center;box-sizing:border-box;padding:0 5px;"><span style="font-family:'Liberation Sans', sans-serif;font-size:28px;line-height:35px;font-weight:normal;color:#000;text-align:left;white-space:pre;position:relative;top:1px;">CHILLER - Fluid Temperature, On Evaporetor Outlet</span></div>
<div style="position:absolute;left:1300px;top:631px;width:213px;height:35px;display:flex;justify-content:center;align-items:center;box-sizing:border-box;padding:0 0px;"><span style="font-family:'Liberation Sans', sans-serif;font-size:28px;line-height:35px;font-weight:normal;color:#000;text-align:center;white-space:pre;position:relative;top:1px;">Soft Link</span></div>
<div style="position:absolute;left:1513px;top:631px;width:226px;height:35px;display:flex;justify-content:center;align-items:center;box-sizing:border-box;padding:0 0px;"><span style="font-family:'Liberation Sans', sans-serif;font-size:28px;line-height:35px;font-weight:normal;color:#000;text-align:center;white-space:pre;position:relative;top:1px;">Soft Link</span></div>
<div style="position:absolute;left:2132px;top:631px;width:156px;height:35px;display:flex;justify-content:center;align-items:center;box-sizing:border-box;padding:0 0px;"><span style="font-family:'Liberation Sans', sans-serif;font-size:28px;line-height:35px;font-weight:normal;color:#000;text-align:center;white-space:pre;position:relative;top:1px;">1</span></div>
<div style="position:absolute;left:2288px;top:631px;width:65px;height:35px;display:flex;justify-content:center;align-items:flex-end;box-sizing:border-box;padding:0 0px;"><span style="font-family:'Liberation Sans', sans-serif;font-size:28px;line-height:35px;font-weight:normal;color:#000;text-align:center;white-space:pre;position:relative;top:1px;top:1.5px;left:1px;">*</span></div>
<div style="position:absolute;left:2418px;top:631px;width:65px;height:35px;display:flex;justify-content:center;align-items:flex-end;box-sizing:border-box;padding:0 0px;"><span style="font-family:'Liberation Sans', sans-serif;font-size:28px;line-height:35px;font-weight:normal;color:#000;text-align:center;white-space:pre;position:relative;top:1px;top:1.5px;left:1px;">*</span></div>
<div style="position:absolute;left:2483px;top:631px;width:64px;height:35px;display:flex;justify-content:center;align-items:center;box-sizing:border-box;padding:0 0px;"><span style="font-family:'Liberation Sans', sans-serif;font-size:28px;line-height:35px;font-weight:bold;color:#000;text-align:center;white-space:pre;position:relative;top:1px;">2</span></div>
<div style="position:absolute;left:2547px;top:631px;width:813px;height:35px;display:flex;justify-content:flex-start;align-items:center;box-sizing:border-box;padding:0 5px;"><span style="font-family:'Liberation Sans', sans-serif;font-size:28px;line-height:35px;font-weight:normal;color:#000;text-align:left;white-space:pre;position:relative;top:1px;">Evaporetor Outlet Temperature</span></div>
<div style="position:absolute;left:3360px;top:631px;width:353px;height:35px;display:flex;justify-content:center;align-items:center;box-sizing:border-box;padding:0 0px;"><span style="font-family:'Liberation Sans', sans-serif;font-size:28px;line-height:35px;font-weight:normal;color:#000;text-align:center;white-space:pre;position:relative;top:1px;">Aziz &amp; Co.</span></div>
<div style="position:absolute;left:173px;top:666px;width:1051px;height:35px;display:flex;justify-content:flex-start;align-items:center;box-sizing:border-box;padding:0 5px;"><span style="font-family:'Liberation Sans', sans-serif;font-size:28px;line-height:35px;font-weight:normal;color:#000;text-align:left;white-space:pre;position:relative;top:1px;">CHILLER - Fluid Temperature, On Evaporetor Inlet</span></div>
<div style="position:absolute;left:1300px;top:666px;width:213px;height:35px;display:flex;justify-content:center;align-items:center;box-sizing:border-box;padding:0 0px;"><span style="font-family:'Liberation Sans', sans-serif;font-size:28px;line-height:35px;font-weight:normal;color:#000;text-align:center;white-space:pre;position:relative;top:1px;">Soft Link</span></div>
<div style="position:absolute;left:1513px;top:666px;width:226px;height:35px;display:flex;justify-content:center;align-items:center;box-sizing:border-box;padding:0 0px;"><span style="font-family:'Liberation Sans', sans-serif;font-size:28px;line-height:35px;font-weight:normal;color:#000;text-align:center;white-space:pre;position:relative;top:1px;">Soft Link</span></div>
<div style="position:absolute;left:2132px;top:666px;width:156px;height:35px;display:flex;justify-content:center;align-items:center;box-sizing:border-box;padding:0 0px;"><span style="font-family:'Liberation Sans', sans-serif;font-size:28px;line-height:35px;font-weight:normal;color:#000;text-align:center;white-space:pre;position:relative;top:1px;">1</span></div>
<div style="position:absolute;left:2288px;top:666px;width:65px;height:35px;display:flex;justify-content:center;align-items:flex-end;box-sizing:border-box;padding:0 0px;"><span style="font-family:'Liberation Sans', sans-serif;font-size:28px;line-height:35px;font-weight:normal;color:#000;text-align:center;white-space:pre;position:relative;top:1px;top:1.5px;left:1px;">*</span></div>
<div style="position:absolute;left:2418px;top:666px;width:65px;height:35px;display:flex;justify-content:center;align-items:flex-end;box-sizing:border-box;padding:0 0px;"><span style="font-family:'Liberation Sans', sans-serif;font-size:28px;line-height:35px;font-weight:normal;color:#000;text-align:center;white-space:pre;position:relative;top:1px;top:1.5px;left:1px;">*</span></div>
<div style="position:absolute;left:2483px;top:666px;width:64px;height:35px;display:flex;justify-content:center;align-items:center;box-sizing:border-box;padding:0 0px;"><span style="font-family:'Liberation Sans', sans-serif;font-size:28px;line-height:35px;font-weight:bold;color:#000;text-align:center;white-space:pre;position:relative;top:1px;">2</span></div>
<div style="position:absolute;left:2547px;top:666px;width:813px;height:35px;display:flex;justify-content:flex-start;align-items:center;box-sizing:border-box;padding:0 5px;"><span style="font-family:'Liberation Sans', sans-serif;font-size:28px;line-height:35px;font-weight:normal;color:#000;text-align:left;white-space:pre;position:relative;top:1px;">Evaporetor Inlet Temperature</span></div>
<div style="position:absolute;left:3360px;top:666px;width:353px;height:35px;display:flex;justify-content:center;align-items:center;box-sizing:border-box;padding:0 0px;"><span style="font-family:'Liberation Sans', sans-serif;font-size:28px;line-height:35px;font-weight:normal;color:#000;text-align:center;white-space:pre;position:relative;top:1px;">Aziz &amp; Co.</span></div>
<div style="position:absolute;left:173px;top:701px;width:1051px;height:35px;display:flex;justify-content:flex-start;align-items:center;box-sizing:border-box;padding:0 5px;"><span style="font-family:'Liberation Sans', sans-serif;font-size:28px;line-height:35px;font-weight:normal;color:#000;text-align:left;white-space:pre;position:relative;top:1px;">CHILLER - Running Current</span></div>
<div style="position:absolute;left:1300px;top:701px;width:213px;height:35px;display:flex;justify-content:center;align-items:center;box-sizing:border-box;padding:0 0px;"><span style="font-family:'Liberation Sans', sans-serif;font-size:28px;line-height:35px;font-weight:normal;color:#000;text-align:center;white-space:pre;position:relative;top:1px;">Soft Link</span></div>
<div style="position:absolute;left:1513px;top:701px;width:226px;height:35px;display:flex;justify-content:center;align-items:center;box-sizing:border-box;padding:0 0px;"><span style="font-family:'Liberation Sans', sans-serif;font-size:28px;line-height:35px;font-weight:normal;color:#000;text-align:center;white-space:pre;position:relative;top:1px;">Soft Link</span></div>
<div style="position:absolute;left:2132px;top:701px;width:156px;height:35px;display:flex;justify-content:center;align-items:center;box-sizing:border-box;padding:0 0px;"><span style="font-family:'Liberation Sans', sans-serif;font-size:28px;line-height:35px;font-weight:normal;color:#000;text-align:center;white-space:pre;position:relative;top:1px;">1</span></div>
<div style="position:absolute;left:2288px;top:701px;width:65px;height:35px;display:flex;justify-content:center;align-items:flex-end;box-sizing:border-box;padding:0 0px;"><span style="font-family:'Liberation Sans', sans-serif;font-size:28px;line-height:35px;font-weight:normal;color:#000;text-align:center;white-space:pre;position:relative;top:1px;top:1.5px;left:1px;">*</span></div>
<div style="position:absolute;left:2418px;top:701px;width:65px;height:35px;display:flex;justify-content:center;align-items:flex-end;box-sizing:border-box;padding:0 0px;"><span style="font-family:'Liberation Sans', sans-serif;font-size:28px;line-height:35px;font-weight:normal;color:#000;text-align:center;white-space:pre;position:relative;top:1px;top:1.5px;left:1px;">*</span></div>
<div style="position:absolute;left:2483px;top:701px;width:64px;height:35px;display:flex;justify-content:center;align-items:center;box-sizing:border-box;padding:0 0px;"><span style="font-family:'Liberation Sans', sans-serif;font-size:28px;line-height:35px;font-weight:bold;color:#000;text-align:center;white-space:pre;position:relative;top:1px;">2</span></div>
<div style="position:absolute;left:2547px;top:701px;width:813px;height:35px;display:flex;justify-content:flex-start;align-items:center;box-sizing:border-box;padding:0 5px;"><span style="font-family:'Liberation Sans', sans-serif;font-size:28px;line-height:35px;font-weight:normal;color:#000;text-align:left;white-space:pre;position:relative;top:1px;">Chiller Current Drawing</span></div>
<div style="position:absolute;left:3360px;top:701px;width:353px;height:35px;display:flex;justify-content:center;align-items:center;box-sizing:border-box;padding:0 0px;"><span style="font-family:'Liberation Sans', sans-serif;font-size:28px;line-height:35px;font-weight:normal;color:#000;text-align:center;white-space:pre;position:relative;top:1px;">Aziz &amp; Co.</span></div>
<div style="position:absolute;left:173px;top:736px;width:1051px;height:70px;display:flex;justify-content:flex-start;align-items:center;box-sizing:border-box;padding:0 5px;"><span style="font-family:'Liberation Sans', sans-serif;font-size:28px;line-height:35px;font-weight:normal;color:#000;text-align:left;white-space:pre;position:relative;top:1px;">CHILLER - Loading Percentage</span></div>
<div style="position:absolute;left:1300px;top:736px;width:213px;height:70px;display:flex;justify-content:center;align-items:center;box-sizing:border-box;padding:0 0px;"><span style="font-family:'Liberation Sans', sans-serif;font-size:28px;line-height:35px;font-weight:normal;color:#000;text-align:center;white-space:pre;position:relative;top:1px;">Soft Link</span></div>
<div style="position:absolute;left:1513px;top:736px;width:226px;height:70px;display:flex;justify-content:center;align-items:center;box-sizing:border-box;padding:0 0px;"><span style="font-family:'Liberation Sans', sans-serif;font-size:28px;line-height:35px;font-weight:normal;color:#000;text-align:center;white-space:pre;position:relative;top:1px;">Soft Link</span></div>
<div style="position:absolute;left:2132px;top:736px;width:156px;height:70px;display:flex;justify-content:center;align-items:center;box-sizing:border-box;padding:0 0px;"><span style="font-family:'Liberation Sans', sans-serif;font-size:28px;line-height:35px;font-weight:normal;color:#000;text-align:center;white-space:pre;position:relative;top:1px;">1</span></div>
<div style="position:absolute;left:2288px;top:736px;width:65px;height:70px;display:flex;justify-content:center;align-items:flex-end;box-sizing:border-box;padding:0 0px;"><span style="font-family:'Liberation Sans', sans-serif;font-size:28px;line-height:35px;font-weight:normal;color:#000;text-align:center;white-space:pre;position:relative;top:1px;top:1.5px;left:1px;">*</span></div>
<div style="position:absolute;left:2418px;top:736px;width:65px;height:70px;display:flex;justify-content:center;align-items:flex-end;box-sizing:border-box;padding:0 0px;"><span style="font-family:'Liberation Sans', sans-serif;font-size:28px;line-height:35px;font-weight:normal;color:#000;text-align:center;white-space:pre;position:relative;top:1px;top:1.5px;left:1px;">*</span></div>
<div style="position:absolute;left:2483px;top:736px;width:64px;height:70px;display:flex;justify-content:center;align-items:center;box-sizing:border-box;padding:0 0px;"><span style="font-family:'Liberation Sans', sans-serif;font-size:28px;line-height:35px;font-weight:bold;color:#000;text-align:center;white-space:pre;position:relative;top:1px;">2</span></div>
<div style="position:absolute;left:2547px;top:736px;width:813px;height:70px;display:flex;justify-content:flex-start;align-items:center;box-sizing:border-box;padding:0 5px;"><span style="font-family:'Liberation Sans', sans-serif;font-size:28px;line-height:35px;font-weight:normal;color:#000;text-align:left;white-space:pre;position:relative;top:1px;">Chiller Total Load - By Counting Number Of Compressor
Running</span></div>
<div style="position:absolute;left:3360px;top:736px;width:353px;height:70px;display:flex;justify-content:center;align-items:center;box-sizing:border-box;padding:0 0px;"><span style="font-family:'Liberation Sans', sans-serif;font-size:28px;line-height:35px;font-weight:normal;color:#000;text-align:center;white-space:pre;position:relative;top:1px;">Aziz &amp; Co.</span></div>
<div style="position:absolute;left:173px;top:806px;width:1051px;height:36px;display:flex;justify-content:flex-start;align-items:center;box-sizing:border-box;padding:0 5px;"><span style="font-family:'Liberation Sans', sans-serif;font-size:28px;line-height:35px;font-weight:normal;color:#000;text-align:left;white-space:pre;position:relative;top:1px;">CHILLER - Fault/Trip Status</span></div>
<div style="position:absolute;left:1300px;top:806px;width:213px;height:36px;display:flex;justify-content:center;align-items:center;box-sizing:border-box;padding:0 0px;"><span style="font-family:'Liberation Sans', sans-serif;font-size:28px;line-height:35px;font-weight:normal;color:#000;text-align:center;white-space:pre;position:relative;top:1px;">VFC</span></div>
<div style="position:absolute;left:1513px;top:806px;width:226px;height:36px;display:flex;justify-content:center;align-items:center;box-sizing:border-box;padding:0 0px;"><span style="font-family:'Liberation Sans', sans-serif;font-size:28px;line-height:35px;font-weight:normal;color:#000;text-align:center;white-space:pre;position:relative;top:1px;">24VDC</span></div>
<div style="position:absolute;left:1739px;top:806px;width:64px;height:36px;display:flex;justify-content:center;align-items:center;box-sizing:border-box;padding:0 0px;"><span style="font-family:'Liberation Sans', sans-serif;font-size:28px;line-height:35px;font-weight:normal;color:#000;text-align:center;white-space:pre;position:relative;top:1px;">3</span></div>
<div style="position:absolute;left:2132px;top:806px;width:156px;height:36px;display:flex;justify-content:center;align-items:center;box-sizing:border-box;padding:0 0px;"><span style="font-family:'Liberation Sans', sans-serif;font-size:28px;line-height:35px;font-weight:normal;color:#000;text-align:center;white-space:pre;position:relative;top:1px;">3</span></div>
<div style="position:absolute;left:2288px;top:806px;width:65px;height:36px;display:flex;justify-content:center;align-items:flex-end;box-sizing:border-box;padding:0 0px;"><span style="font-family:'Liberation Sans', sans-serif;font-size:28px;line-height:35px;font-weight:normal;color:#000;text-align:center;white-space:pre;position:relative;top:1px;top:1.5px;left:1px;">*</span></div>
<div style="position:absolute;left:2418px;top:806px;width:65px;height:36px;display:flex;justify-content:center;align-items:flex-end;box-sizing:border-box;padding:0 0px;"><span style="font-family:'Liberation Sans', sans-serif;font-size:28px;line-height:35px;font-weight:normal;color:#000;text-align:center;white-space:pre;position:relative;top:1px;top:1.5px;left:1px;">*</span></div>
<div style="position:absolute;left:2483px;top:806px;width:64px;height:36px;display:flex;justify-content:center;align-items:center;box-sizing:border-box;padding:0 0px;"><span style="font-family:'Liberation Sans', sans-serif;font-size:28px;line-height:35px;font-weight:bold;color:#000;text-align:center;white-space:pre;position:relative;top:1px;">1</span></div>
<div style="position:absolute;left:2547px;top:806px;width:813px;height:36px;display:flex;justify-content:flex-start;align-items:center;box-sizing:border-box;padding:0 5px;"><span style="font-family:'Liberation Sans', sans-serif;font-size:28px;line-height:35px;font-weight:normal;color:#000;text-align:left;white-space:pre;position:relative;top:1px;">Chiller Trip Status (Combined of 3 Chiller)</span></div>
<div style="position:absolute;left:3360px;top:806px;width:353px;height:36px;display:flex;justify-content:center;align-items:center;box-sizing:border-box;padding:0 0px;"><span style="font-family:'Liberation Sans', sans-serif;font-size:28px;line-height:35px;font-weight:normal;color:#000;text-align:center;white-space:pre;position:relative;top:1px;">Aziz &amp; Co.</span></div>
<div style="position:absolute;left:173px;top:842px;width:1051px;height:35px;display:flex;justify-content:flex-start;align-items:center;box-sizing:border-box;padding:0 5px;"><span style="font-family:'Liberation Sans', sans-serif;font-size:28px;line-height:35px;font-weight:normal;color:#000;text-align:left;white-space:pre;position:relative;top:1px;">CHILLER - Breaker Status</span></div>
<div style="position:absolute;left:1300px;top:842px;width:213px;height:35px;display:flex;justify-content:center;align-items:center;box-sizing:border-box;padding:0 0px;"><span style="font-family:'Liberation Sans', sans-serif;font-size:28px;line-height:35px;font-weight:normal;color:#000;text-align:center;white-space:pre;position:relative;top:1px;">VFC</span></div>
<div style="position:absolute;left:1513px;top:842px;width:226px;height:35px;display:flex;justify-content:center;align-items:center;box-sizing:border-box;padding:0 0px;"><span style="font-family:'Liberation Sans', sans-serif;font-size:28px;line-height:35px;font-weight:normal;color:#000;text-align:center;white-space:pre;position:relative;top:1px;">24VDC</span></div>
<div style="position:absolute;left:2288px;top:842px;width:65px;height:35px;display:flex;justify-content:center;align-items:flex-end;box-sizing:border-box;padding:0 0px;"><span style="font-family:'Liberation Sans', sans-serif;font-size:28px;line-height:35px;font-weight:normal;color:#000;text-align:center;white-space:pre;position:relative;top:1px;top:1.5px;left:1px;">*</span></div>
<div style="position:absolute;left:2418px;top:842px;width:65px;height:35px;display:flex;justify-content:center;align-items:flex-end;box-sizing:border-box;padding:0 0px;"><span style="font-family:'Liberation Sans', sans-serif;font-size:28px;line-height:35px;font-weight:normal;color:#000;text-align:center;white-space:pre;position:relative;top:1px;top:1.5px;left:1px;">*</span></div>
<div style="position:absolute;left:2483px;top:842px;width:64px;height:35px;display:flex;justify-content:center;align-items:center;box-sizing:border-box;padding:0 0px;"><span style="font-family:'Liberation Sans', sans-serif;font-size:28px;line-height:35px;font-weight:bold;color:#000;text-align:center;white-space:pre;position:relative;top:1px;">2</span></div>
<div style="position:absolute;left:2547px;top:842px;width:813px;height:35px;display:flex;justify-content:flex-start;align-items:center;box-sizing:border-box;padding:0 5px;"><span style="font-family:'Liberation Sans', sans-serif;font-size:28px;line-height:35px;font-weight:normal;color:#000;text-align:left;white-space:pre;position:relative;top:1px;">Chiller Power Available Proof</span></div>
<div style="position:absolute;left:3360px;top:842px;width:353px;height:35px;display:flex;justify-content:center;align-items:center;box-sizing:border-box;padding:0 0px;"><span style="font-family:'Liberation Sans', sans-serif;font-size:28px;line-height:35px;font-weight:normal;color:#000;text-align:center;white-space:pre;position:relative;top:1px;">EnergyPac</span></div>
<div style="position:absolute;left:173px;top:877px;width:1051px;height:35px;display:flex;justify-content:flex-start;align-items:center;box-sizing:border-box;padding:0 5px;"><span style="font-family:'Liberation Sans', sans-serif;font-size:28px;line-height:35px;font-weight:normal;color:#000;text-align:left;white-space:pre;position:relative;top:1px;">CHILLER - Fluid Flow Detection,On Evaporetor Inlet</span></div>
<div style="position:absolute;left:1300px;top:877px;width:213px;height:35px;display:flex;justify-content:center;align-items:center;box-sizing:border-box;padding:0 0px;"><span style="font-family:'Liberation Sans', sans-serif;font-size:28px;line-height:35px;font-weight:normal;color:#000;text-align:center;white-space:pre;position:relative;top:1px;">VFC</span></div>
<div style="position:absolute;left:1513px;top:877px;width:226px;height:35px;display:flex;justify-content:center;align-items:center;box-sizing:border-box;padding:0 0px;"><span style="font-family:'Liberation Sans', sans-serif;font-size:28px;line-height:35px;font-weight:normal;color:#000;text-align:center;white-space:pre;position:relative;top:1px;">24VDC</span></div>
<div style="position:absolute;left:1739px;top:877px;width:64px;height:35px;display:flex;justify-content:center;align-items:center;box-sizing:border-box;padding:0 0px;"><span style="font-family:'Liberation Sans', sans-serif;font-size:28px;line-height:35px;font-weight:normal;color:#000;text-align:center;white-space:pre;position:relative;top:1px;">3</span></div>
<div style="position:absolute;left:2288px;top:877px;width:65px;height:35px;display:flex;justify-content:center;align-items:flex-end;box-sizing:border-box;padding:0 0px;"><span style="font-family:'Liberation Sans', sans-serif;font-size:28px;line-height:35px;font-weight:normal;color:#000;text-align:center;white-space:pre;position:relative;top:1px;top:1.5px;left:1px;">*</span></div>
<div style="position:absolute;left:2418px;top:877px;width:65px;height:35px;display:flex;justify-content:center;align-items:flex-end;box-sizing:border-box;padding:0 0px;"><span style="font-family:'Liberation Sans', sans-serif;font-size:28px;line-height:35px;font-weight:normal;color:#000;text-align:center;white-space:pre;position:relative;top:1px;top:1.5px;left:1px;">*</span></div>
<div style="position:absolute;left:2483px;top:877px;width:64px;height:35px;display:flex;justify-content:center;align-items:center;box-sizing:border-box;padding:0 0px;"><span style="font-family:'Liberation Sans', sans-serif;font-size:28px;line-height:35px;font-weight:bold;color:#000;text-align:center;white-space:pre;position:relative;top:1px;">1</span></div>
<div style="position:absolute;left:2547px;top:877px;width:813px;height:35px;display:flex;justify-content:flex-start;align-items:center;box-sizing:border-box;padding:0 5px;"><span style="font-family:'Liberation Sans', sans-serif;font-size:28px;line-height:35px;font-weight:normal;color:#000;text-align:left;white-space:pre;position:relative;top:1px;font-size:27.5px;">Conformation of water flow on Evaporetor (Combined of 3 Chiller)</span></div>
<div style="position:absolute;left:3360px;top:877px;width:353px;height:35px;display:flex;justify-content:center;align-items:center;box-sizing:border-box;padding:0 0px;"><span style="font-family:'Liberation Sans', sans-serif;font-size:28px;line-height:35px;font-weight:normal;color:#000;text-align:center;white-space:pre;position:relative;top:1px;">Aziz &amp; Co.</span></div>
<div style="position:absolute;left:173px;top:912px;width:1051px;height:35px;display:flex;justify-content:flex-start;align-items:center;box-sizing:border-box;padding:0 5px;"><span style="font-family:'Liberation Sans', sans-serif;font-size:28px;line-height:35px;font-weight:normal;color:#000;text-align:left;white-space:pre;position:relative;top:1px;">CHILLER - Running Status</span></div>
<div style="position:absolute;left:1300px;top:912px;width:213px;height:35px;display:flex;justify-content:center;align-items:center;box-sizing:border-box;padding:0 0px;"><span style="font-family:'Liberation Sans', sans-serif;font-size:28px;line-height:35px;font-weight:normal;color:#000;text-align:center;white-space:pre;position:relative;top:1px;">VFC</span></div>
<div style="position:absolute;left:1513px;top:912px;width:226px;height:35px;display:flex;justify-content:center;align-items:center;box-sizing:border-box;padding:0 0px;"><span style="font-family:'Liberation Sans', sans-serif;font-size:28px;line-height:35px;font-weight:normal;color:#000;text-align:center;white-space:pre;position:relative;top:1px;">24VDC</span></div>
<div style="position:absolute;left:1739px;top:912px;width:64px;height:35px;display:flex;justify-content:center;align-items:center;box-sizing:border-box;padding:0 0px;"><span style="font-family:'Liberation Sans', sans-serif;font-size:28px;line-height:35px;font-weight:normal;color:#000;text-align:center;white-space:pre;position:relative;top:1px;">3</span></div>
<div style="position:absolute;left:2132px;top:912px;width:156px;height:35px;display:flex;justify-content:center;align-items:center;box-sizing:border-box;padding:0 0px;"><span style="font-family:'Liberation Sans', sans-serif;font-size:28px;line-height:35px;font-weight:normal;color:#000;text-align:center;white-space:pre;position:relative;top:1px;">3</span></div>
<div style="position:absolute;left:2288px;top:912px;width:65px;height:35px;display:flex;justify-content:center;align-items:flex-end;box-sizing:border-box;padding:0 0px;"><span style="font-family:'Liberation Sans', sans-serif;font-size:28px;line-height:35px;font-weight:normal;color:#000;text-align:center;white-space:pre;position:relative;top:1px;top:1.5px;left:1px;">*</span></div>
<div style="position:absolute;left:2418px;top:912px;width:65px;height:35px;display:flex;justify-content:center;align-items:flex-end;box-sizing:border-box;padding:0 0px;"><span style="font-family:'Liberation Sans', sans-serif;font-size:28px;line-height:35px;font-weight:normal;color:#000;text-align:center;white-space:pre;position:relative;top:1px;top:1.5px;left:1px;">*</span></div>
<div style="position:absolute;left:2483px;top:912px;width:64px;height:35px;display:flex;justify-content:center;align-items:center;box-sizing:border-box;padding:0 0px;"><span style="font-family:'Liberation Sans', sans-serif;font-size:28px;line-height:35px;font-weight:bold;color:#000;text-align:center;white-space:pre;position:relative;top:1px;">1</span></div>
<div style="position:absolute;left:2547px;top:912px;width:813px;height:35px;display:flex;justify-content:flex-start;align-items:center;box-sizing:border-box;padding:0 5px;"><span style="font-family:'Liberation Sans', sans-serif;font-size:28px;line-height:35px;font-weight:normal;color:#000;text-align:left;white-space:pre;position:relative;top:1px;">Chiller Running Status (Combined of 3 Chiller)</span></div>
<div style="position:absolute;left:3360px;top:912px;width:353px;height:35px;display:flex;justify-content:center;align-items:center;box-sizing:border-box;padding:0 0px;"><span style="font-family:'Liberation Sans', sans-serif;font-size:28px;line-height:35px;font-weight:normal;color:#000;text-align:center;white-space:pre;position:relative;top:1px;">Aziz &amp; Co.</span></div>
<div style="position:absolute;left:173px;top:947px;width:1051px;height:35px;display:flex;justify-content:flex-start;align-items:center;box-sizing:border-box;padding:0 5px;"><span style="font-family:'Liberation Sans', sans-serif;font-size:28px;line-height:35px;font-weight:normal;color:#000;text-align:left;white-space:pre;position:relative;top:1px;">CHILLER - Local /Remote mode</span></div>
<div style="position:absolute;left:1300px;top:947px;width:213px;height:35px;display:flex;justify-content:center;align-items:center;box-sizing:border-box;padding:0 0px;"><span style="font-family:'Liberation Sans', sans-serif;font-size:28px;line-height:35px;font-weight:normal;color:#000;text-align:center;white-space:pre;position:relative;top:1px;">VFC</span></div>
<div style="position:absolute;left:1513px;top:947px;width:226px;height:35px;display:flex;justify-content:center;align-items:center;box-sizing:border-box;padding:0 0px;"><span style="font-family:'Liberation Sans', sans-serif;font-size:28px;line-height:35px;font-weight:normal;color:#000;text-align:center;white-space:pre;position:relative;top:1px;">24VDC</span></div>
<div style="position:absolute;left:1739px;top:947px;width:64px;height:35px;display:flex;justify-content:center;align-items:center;box-sizing:border-box;padding:0 0px;"><span style="font-family:'Liberation Sans', sans-serif;font-size:28px;line-height:35px;font-weight:normal;color:#000;text-align:center;white-space:pre;position:relative;top:1px;">2</span></div>
<div style="position:absolute;left:2132px;top:947px;width:156px;height:35px;display:flex;justify-content:center;align-items:center;box-sizing:border-box;padding:0 0px;"><span style="font-family:'Liberation Sans', sans-serif;font-size:28px;line-height:35px;font-weight:normal;color:#000;text-align:center;white-space:pre;position:relative;top:1px;">2</span></div>
<div style="position:absolute;left:2288px;top:947px;width:65px;height:35px;display:flex;justify-content:center;align-items:flex-end;box-sizing:border-box;padding:0 0px;"><span style="font-family:'Liberation Sans', sans-serif;font-size:28px;line-height:35px;font-weight:normal;color:#000;text-align:center;white-space:pre;position:relative;top:1px;top:1.5px;left:1px;">*</span></div>
<div style="position:absolute;left:2418px;top:947px;width:65px;height:35px;display:flex;justify-content:center;align-items:flex-end;box-sizing:border-box;padding:0 0px;"><span style="font-family:'Liberation Sans', sans-serif;font-size:28px;line-height:35px;font-weight:normal;color:#000;text-align:center;white-space:pre;position:relative;top:1px;top:1.5px;left:1px;">*</span></div>
<div style="position:absolute;left:2483px;top:947px;width:64px;height:35px;display:flex;justify-content:center;align-items:center;box-sizing:border-box;padding:0 0px;"><span style="font-family:'Liberation Sans', sans-serif;font-size:28px;line-height:35px;font-weight:bold;color:#000;text-align:center;white-space:pre;position:relative;top:1px;">2</span></div>
<div style="position:absolute;left:2547px;top:947px;width:813px;height:35px;display:flex;justify-content:flex-start;align-items:center;box-sizing:border-box;padding:0 5px;"><span style="font-family:'Liberation Sans', sans-serif;font-size:28px;line-height:35px;font-weight:normal;color:#000;text-align:left;white-space:pre;position:relative;top:1px;">Chiller Run Command Source Selection (Combined of 3 Chiller)</span></div>
<div style="position:absolute;left:3360px;top:947px;width:353px;height:35px;display:flex;justify-content:center;align-items:center;box-sizing:border-box;padding:0 0px;"><span style="font-family:'Liberation Sans', sans-serif;font-size:28px;line-height:35px;font-weight:normal;color:#000;text-align:center;white-space:pre;position:relative;top:1px;">Aziz &amp; Co.</span></div>
<div style="position:absolute;left:173px;top:982px;width:1051px;height:35px;display:flex;justify-content:flex-start;align-items:center;box-sizing:border-box;padding:0 5px;"><span style="font-family:'Liberation Sans', sans-serif;font-size:28px;line-height:35px;font-weight:normal;color:#000;text-align:left;white-space:pre;position:relative;top:1px;">CHILLER - Run command</span></div>
<div style="position:absolute;left:1300px;top:982px;width:213px;height:35px;display:flex;justify-content:center;align-items:center;box-sizing:border-box;padding:0 0px;"><span style="font-family:'Liberation Sans', sans-serif;font-size:28px;line-height:35px;font-weight:normal;color:#000;text-align:center;white-space:pre;position:relative;top:1px;">24VDC</span></div>
<div style="position:absolute;left:1513px;top:982px;width:226px;height:35px;display:flex;justify-content:center;align-items:center;box-sizing:border-box;padding:0 0px;"><span style="font-family:'Liberation Sans', sans-serif;font-size:28px;line-height:35px;font-weight:normal;color:#000;text-align:center;white-space:pre;position:relative;top:1px;">VFC</span></div>
<div style="position:absolute;left:1879px;top:982px;width:60px;height:35px;display:flex;justify-content:center;align-items:center;box-sizing:border-box;padding:0 0px;"><span style="font-family:'Liberation Sans', sans-serif;font-size:28px;line-height:35px;font-weight:normal;color:#000;text-align:center;white-space:pre;position:relative;top:1px;">3</span></div>
<div style="position:absolute;left:2288px;top:982px;width:65px;height:35px;display:flex;justify-content:center;align-items:flex-end;box-sizing:border-box;padding:0 0px;"><span style="font-family:'Liberation Sans', sans-serif;font-size:28px;line-height:35px;font-weight:normal;color:#000;text-align:center;white-space:pre;position:relative;top:1px;top:1.5px;left:1px;">*</span></div>
<div style="position:absolute;left:2353px;top:982px;width:65px;height:35px;display:flex;justify-content:center;align-items:flex-end;box-sizing:border-box;padding:0 0px;"><span style="font-family:'Liberation Sans', sans-serif;font-size:28px;line-height:35px;font-weight:normal;color:#000;text-align:center;white-space:pre;position:relative;top:1px;top:1.5px;left:1px;">*</span></div>
<div style="position:absolute;left:2418px;top:982px;width:65px;height:35px;display:flex;justify-content:center;align-items:flex-end;box-sizing:border-box;padding:0 0px;"><span style="font-family:'Liberation Sans', sans-serif;font-size:28px;line-height:35px;font-weight:normal;color:#000;text-align:center;white-space:pre;position:relative;top:1px;top:1.5px;left:1px;">*</span></div>
<div style="position:absolute;left:2483px;top:982px;width:64px;height:35px;display:flex;justify-content:center;align-items:center;box-sizing:border-box;padding:0 0px;"><span style="font-family:'Liberation Sans', sans-serif;font-size:28px;line-height:35px;font-weight:bold;color:#000;text-align:center;white-space:pre;position:relative;top:1px;">2</span></div>
<div style="position:absolute;left:2547px;top:982px;width:813px;height:35px;display:flex;justify-content:flex-start;align-items:center;box-sizing:border-box;padding:0 5px;"><span style="font-family:'Liberation Sans', sans-serif;font-size:28px;line-height:35px;font-weight:normal;color:#000;text-align:left;white-space:pre;position:relative;top:1px;">BMS Run Command (Combined of 3 Chiller)</span></div>
<div style="position:absolute;left:3360px;top:982px;width:353px;height:35px;display:flex;justify-content:center;align-items:center;box-sizing:border-box;padding:0 0px;"><span style="font-family:'Liberation Sans', sans-serif;font-size:28px;line-height:35px;font-weight:normal;color:#000;text-align:center;white-space:pre;position:relative;top:1px;">Aziz &amp; Co.</span></div>
<div style="position:absolute;left:173px;top:1017px;width:1051px;height:35px;display:flex;justify-content:flex-start;align-items:center;box-sizing:border-box;padding:0 5px;"><span style="font-family:'Liberation Sans', sans-serif;font-size:28px;line-height:35px;font-weight:normal;color:#000;text-align:left;white-space:pre;position:relative;top:1px;">Evaporetor Valve - OPEN/CLOSE Command</span></div>
<div style="position:absolute;left:1300px;top:1017px;width:213px;height:35px;display:flex;justify-content:center;align-items:center;box-sizing:border-box;padding:0 0px;"><span style="font-family:'Liberation Sans', sans-serif;font-size:28px;line-height:35px;font-weight:normal;color:#000;text-align:center;white-space:pre;position:relative;top:1px;">220VAC</span></div>
<div style="position:absolute;left:1513px;top:1017px;width:226px;height:35px;display:flex;justify-content:center;align-items:center;box-sizing:border-box;padding:0 0px;"><span style="font-family:'Liberation Sans', sans-serif;font-size:28px;line-height:35px;font-weight:normal;color:#000;text-align:center;white-space:pre;position:relative;top:1px;">VFC</span></div>
<div style="position:absolute;left:1879px;top:1017px;width:60px;height:35px;display:flex;justify-content:center;align-items:center;box-sizing:border-box;padding:0 0px;"><span style="font-family:'Liberation Sans', sans-serif;font-size:28px;line-height:35px;font-weight:normal;color:#000;text-align:center;white-space:pre;position:relative;top:1px;">1</span></div>
<div style="position:absolute;left:2353px;top:1017px;width:65px;height:35px;display:flex;justify-content:center;align-items:flex-end;box-sizing:border-box;padding:0 0px;"><span style="font-family:'Liberation Sans', sans-serif;font-size:28px;line-height:35px;font-weight:normal;color:#000;text-align:center;white-space:pre;position:relative;top:1px;top:1.5px;left:1px;">*</span></div>
<div style="position:absolute;left:2418px;top:1017px;width:65px;height:35px;display:flex;justify-content:center;align-items:flex-end;box-sizing:border-box;padding:0 0px;"><span style="font-family:'Liberation Sans', sans-serif;font-size:28px;line-height:35px;font-weight:normal;color:#000;text-align:center;white-space:pre;position:relative;top:1px;top:1.5px;left:1px;">*</span></div>
<div style="position:absolute;left:2483px;top:1017px;width:64px;height:35px;display:flex;justify-content:center;align-items:center;box-sizing:border-box;padding:0 0px;"><span style="font-family:'Liberation Sans', sans-serif;font-size:28px;line-height:35px;font-weight:bold;color:#000;text-align:center;white-space:pre;position:relative;top:1px;">1</span></div>
<div style="position:absolute;left:2547px;top:1017px;width:813px;height:35px;display:flex;justify-content:flex-start;align-items:center;box-sizing:border-box;padding:0 5px;"><span style="font-family:'Liberation Sans', sans-serif;font-size:28px;line-height:35px;font-weight:normal;color:#000;text-align:left;white-space:pre;position:relative;top:1px;">BMS Open/Close Command</span></div>
<div style="position:absolute;left:3360px;top:1017px;width:353px;height:35px;display:flex;justify-content:center;align-items:center;box-sizing:border-box;padding:0 0px;"><span style="font-family:'Liberation Sans', sans-serif;font-size:28px;line-height:35px;font-weight:normal;color:#000;text-align:center;white-space:pre;position:relative;top:1px;">Aziz &amp; Co.</span></div>
<div style="position:absolute;left:173px;top:1052px;width:1051px;height:35px;display:flex;justify-content:flex-start;align-items:center;box-sizing:border-box;padding:0 5px;"><span style="font-family:'Liberation Sans', sans-serif;font-size:28px;line-height:35px;font-weight:normal;color:#000;text-align:left;white-space:pre;position:relative;top:1px;">Evaporetor Valve - OPEN/CLOSE Status</span></div>
<div style="position:absolute;left:1300px;top:1052px;width:213px;height:35px;display:flex;justify-content:center;align-items:center;box-sizing:border-box;padding:0 0px;"><span style="font-family:'Liberation Sans', sans-serif;font-size:28px;line-height:35px;font-weight:normal;color:#000;text-align:center;white-space:pre;position:relative;top:1px;">VFC</span></div>
<div style="position:absolute;left:1513px;top:1052px;width:226px;height:35px;display:flex;justify-content:center;align-items:center;box-sizing:border-box;padding:0 0px;"><span style="font-family:'Liberation Sans', sans-serif;font-size:28px;line-height:35px;font-weight:normal;color:#000;text-align:center;white-space:pre;position:relative;top:1px;">24VDC</span></div>
<div style="position:absolute;left:1739px;top:1052px;width:64px;height:35px;display:flex;justify-content:center;align-items:center;box-sizing:border-box;padding:0 0px;"><span style="font-family:'Liberation Sans', sans-serif;font-size:28px;line-height:35px;font-weight:normal;color:#000;text-align:center;white-space:pre;position:relative;top:1px;">2</span></div>
<div style="position:absolute;left:2288px;top:1052px;width:65px;height:35px;display:flex;justify-content:center;align-items:flex-end;box-sizing:border-box;padding:0 0px;"><span style="font-family:'Liberation Sans', sans-serif;font-size:28px;line-height:35px;font-weight:normal;color:#000;text-align:center;white-space:pre;position:relative;top:1px;top:1.5px;left:1px;">*</span></div>
<div style="position:absolute;left:2418px;top:1052px;width:65px;height:35px;display:flex;justify-content:center;align-items:flex-end;box-sizing:border-box;padding:0 0px;"><span style="font-family:'Liberation Sans', sans-serif;font-size:28px;line-height:35px;font-weight:normal;color:#000;text-align:center;white-space:pre;position:relative;top:1px;top:1.5px;left:1px;">*</span></div>
<div style="position:absolute;left:2483px;top:1052px;width:64px;height:35px;display:flex;justify-content:center;align-items:center;box-sizing:border-box;padding:0 0px;"><span style="font-family:'Liberation Sans', sans-serif;font-size:28px;line-height:35px;font-weight:bold;color:#000;text-align:center;white-space:pre;position:relative;top:1px;">1</span></div>
<div style="position:absolute;left:2547px;top:1052px;width:813px;height:35px;display:flex;justify-content:flex-start;align-items:center;box-sizing:border-box;padding:0 5px;"><span style="font-family:'Liberation Sans', sans-serif;font-size:28px;line-height:35px;font-weight:normal;color:#000;text-align:left;white-space:pre;position:relative;top:1px;">BMS Conformation of Open/Close State</span></div>
<div style="position:absolute;left:3360px;top:1052px;width:353px;height:35px;display:flex;justify-content:center;align-items:center;box-sizing:border-box;padding:0 0px;"><span style="font-family:'Liberation Sans', sans-serif;font-size:28px;line-height:35px;font-weight:normal;color:#000;text-align:center;white-space:pre;position:relative;top:1px;">Aziz &amp; Co.</span></div>
<div style="position:absolute;left:173px;top:1087px;width:1051px;height:35px;display:flex;justify-content:flex-start;align-items:center;box-sizing:border-box;padding:0 5px;"><span style="font-family:'Liberation Sans', sans-serif;font-size:28px;line-height:35px;font-weight:normal;color:#000;text-align:left;white-space:pre;position:relative;top:1px;">Flow Control from Air to Water Valve - OPEN/CLOSE Command</span></div>
<div style="position:absolute;left:1300px;top:1087px;width:213px;height:35px;display:flex;justify-content:center;align-items:center;box-sizing:border-box;padding:0 0px;"><span style="font-family:'Liberation Sans', sans-serif;font-size:28px;line-height:35px;font-weight:normal;color:#000;text-align:center;white-space:pre;position:relative;top:1px;">220VAC</span></div>
<div style="position:absolute;left:1513px;top:1087px;width:226px;height:35px;display:flex;justify-content:center;align-items:center;box-sizing:border-box;padding:0 0px;"><span style="font-family:'Liberation Sans', sans-serif;font-size:28px;line-height:35px;font-weight:normal;color:#000;text-align:center;white-space:pre;position:relative;top:1px;">VFC</span></div>
<div style="position:absolute;left:1879px;top:1087px;width:60px;height:35px;display:flex;justify-content:center;align-items:center;box-sizing:border-box;padding:0 0px;"><span style="font-family:'Liberation Sans', sans-serif;font-size:28px;line-height:35px;font-weight:normal;color:#000;text-align:center;white-space:pre;position:relative;top:1px;">1</span></div>
<div style="position:absolute;left:2353px;top:1087px;width:65px;height:35px;display:flex;justify-content:center;align-items:flex-end;box-sizing:border-box;padding:0 0px;"><span style="font-family:'Liberation Sans', sans-serif;font-size:28px;line-height:35px;font-weight:normal;color:#000;text-align:center;white-space:pre;position:relative;top:1px;top:1.5px;left:1px;">*</span></div>
<div style="position:absolute;left:2418px;top:1087px;width:65px;height:35px;display:flex;justify-content:center;align-items:flex-end;box-sizing:border-box;padding:0 0px;"><span style="font-family:'Liberation Sans', sans-serif;font-size:28px;line-height:35px;font-weight:normal;color:#000;text-align:center;white-space:pre;position:relative;top:1px;top:1.5px;left:1px;">*</span></div>
<div style="position:absolute;left:2483px;top:1087px;width:64px;height:35px;display:flex;justify-content:center;align-items:center;box-sizing:border-box;padding:0 0px;"><span style="font-family:'Liberation Sans', sans-serif;font-size:28px;line-height:35px;font-weight:bold;color:#000;text-align:center;white-space:pre;position:relative;top:1px;">1</span></div>
<div style="position:absolute;left:2547px;top:1087px;width:813px;height:35px;display:flex;justify-content:flex-start;align-items:center;box-sizing:border-box;padding:0 5px;"><span style="font-family:'Liberation Sans', sans-serif;font-size:28px;line-height:35px;font-weight:normal;color:#000;text-align:left;white-space:pre;position:relative;top:1px;">BMS Open/Close Command</span></div>
<div style="position:absolute;left:3360px;top:1087px;width:353px;height:35px;display:flex;justify-content:center;align-items:center;box-sizing:border-box;padding:0 0px;"><span style="font-family:'Liberation Sans', sans-serif;font-size:28px;line-height:35px;font-weight:normal;color:#000;text-align:center;white-space:pre;position:relative;top:1px;">Aziz &amp; Co.</span></div>
<div style="position:absolute;left:173px;top:1122px;width:1051px;height:35px;display:flex;justify-content:flex-start;align-items:center;box-sizing:border-box;padding:0 5px;"><span style="font-family:'Liberation Sans', sans-serif;font-size:28px;line-height:35px;font-weight:normal;color:#000;text-align:left;white-space:pre;position:relative;top:1px;">Flow Control from Air to Water Valve - OPEN/CLOSE Status</span></div>
<div style="position:absolute;left:1300px;top:1122px;width:213px;height:35px;display:flex;justify-content:center;align-items:center;box-sizing:border-box;padding:0 0px;"><span style="font-family:'Liberation Sans', sans-serif;font-size:28px;line-height:35px;font-weight:normal;color:#000;text-align:center;white-space:pre;position:relative;top:1px;">VFC</span></div>
<div style="position:absolute;left:1513px;top:1122px;width:226px;height:35px;display:flex;justify-content:center;align-items:center;box-sizing:border-box;padding:0 0px;"><span style="font-family:'Liberation Sans', sans-serif;font-size:28px;line-height:35px;font-weight:normal;color:#000;text-align:center;white-space:pre;position:relative;top:1px;">24VDC</span></div>
<div style="position:absolute;left:1739px;top:1122px;width:64px;height:35px;display:flex;justify-content:center;align-items:center;box-sizing:border-box;padding:0 0px;"><span style="font-family:'Liberation Sans', sans-serif;font-size:28px;line-height:35px;font-weight:normal;color:#000;text-align:center;white-space:pre;position:relative;top:1px;">2</span></div>
<div style="position:absolute;left:2288px;top:1122px;width:65px;height:35px;display:flex;justify-content:center;align-items:flex-end;box-sizing:border-box;padding:0 0px;"><span style="font-family:'Liberation Sans', sans-serif;font-size:28px;line-height:35px;font-weight:normal;color:#000;text-align:center;white-space:pre;position:relative;top:1px;top:1.5px;left:1px;">*</span></div>
<div style="position:absolute;left:2418px;top:1122px;width:65px;height:35px;display:flex;justify-content:center;align-items:flex-end;box-sizing:border-box;padding:0 0px;"><span style="font-family:'Liberation Sans', sans-serif;font-size:28px;line-height:35px;font-weight:normal;color:#000;text-align:center;white-space:pre;position:relative;top:1px;top:1.5px;left:1px;">*</span></div>
<div style="position:absolute;left:2483px;top:1122px;width:64px;height:35px;display:flex;justify-content:center;align-items:center;box-sizing:border-box;padding:0 0px;"><span style="font-family:'Liberation Sans', sans-serif;font-size:28px;line-height:35px;font-weight:bold;color:#000;text-align:center;white-space:pre;position:relative;top:1px;">1</span></div>
<div style="position:absolute;left:2547px;top:1122px;width:813px;height:35px;display:flex;justify-content:flex-start;align-items:center;box-sizing:border-box;padding:0 5px;"><span style="font-family:'Liberation Sans', sans-serif;font-size:28px;line-height:35px;font-weight:normal;color:#000;text-align:left;white-space:pre;position:relative;top:1px;">BMS Conformation of Open/Close State</span></div>
<div style="position:absolute;left:3360px;top:1122px;width:353px;height:35px;display:flex;justify-content:center;align-items:center;box-sizing:border-box;padding:0 0px;"><span style="font-family:'Liberation Sans', sans-serif;font-size:28px;line-height:35px;font-weight:normal;color:#000;text-align:center;white-space:pre;position:relative;top:1px;">Aziz &amp; Co.</span></div>
<div style="position:absolute;left:173px;top:1157px;width:1051px;height:35px;display:flex;justify-content:flex-start;align-items:center;box-sizing:border-box;padding:0 5px;"><span style="font-family:'Liberation Sans', sans-serif;font-size:28px;line-height:35px;font-weight:normal;color:#000;text-align:left;white-space:pre;position:relative;top:1px;">Motorized Valve On Bypass Line - OPEN/CLOSE Command</span></div>
<div style="position:absolute;left:1300px;top:1157px;width:213px;height:35px;display:flex;justify-content:center;align-items:center;box-sizing:border-box;padding:0 0px;"><span style="font-family:'Liberation Sans', sans-serif;font-size:28px;line-height:35px;font-weight:normal;color:#000;text-align:center;white-space:pre;position:relative;top:1px;">220VAC</span></div>
<div style="position:absolute;left:1513px;top:1157px;width:226px;height:35px;display:flex;justify-content:center;align-items:center;box-sizing:border-box;padding:0 0px;"><span style="font-family:'Liberation Sans', sans-serif;font-size:28px;line-height:35px;font-weight:normal;color:#000;text-align:center;white-space:pre;position:relative;top:1px;">VFC</span></div>
<div style="position:absolute;left:1879px;top:1157px;width:60px;height:35px;display:flex;justify-content:center;align-items:center;box-sizing:border-box;padding:0 0px;"><span style="font-family:'Liberation Sans', sans-serif;font-size:28px;line-height:35px;font-weight:normal;color:#000;text-align:center;white-space:pre;position:relative;top:1px;">1</span></div>
<div style="position:absolute;left:2353px;top:1157px;width:65px;height:35px;display:flex;justify-content:center;align-items:flex-end;box-sizing:border-box;padding:0 0px;"><span style="font-family:'Liberation Sans', sans-serif;font-size:28px;line-height:35px;font-weight:normal;color:#000;text-align:center;white-space:pre;position:relative;top:1px;top:1.5px;left:1px;">*</span></div>
<div style="position:absolute;left:2418px;top:1157px;width:65px;height:35px;display:flex;justify-content:center;align-items:flex-end;box-sizing:border-box;padding:0 0px;"><span style="font-family:'Liberation Sans', sans-serif;font-size:28px;line-height:35px;font-weight:normal;color:#000;text-align:center;white-space:pre;position:relative;top:1px;top:1.5px;left:1px;">*</span></div>
<div style="position:absolute;left:2483px;top:1157px;width:64px;height:35px;display:flex;justify-content:center;align-items:center;box-sizing:border-box;padding:0 0px;"><span style="font-family:'Liberation Sans', sans-serif;font-size:28px;line-height:35px;font-weight:bold;color:#000;text-align:center;white-space:pre;position:relative;top:1px;">2</span></div>
<div style="position:absolute;left:2547px;top:1157px;width:813px;height:35px;display:flex;justify-content:flex-start;align-items:center;box-sizing:border-box;padding:0 5px;"><span style="font-family:'Liberation Sans', sans-serif;font-size:28px;line-height:35px;font-weight:normal;color:#000;text-align:left;white-space:pre;position:relative;top:1px;">BMS Open/Close Command</span></div>
<div style="position:absolute;left:3360px;top:1157px;width:353px;height:35px;display:flex;justify-content:center;align-items:center;box-sizing:border-box;padding:0 0px;"><span style="font-family:'Liberation Sans', sans-serif;font-size:28px;line-height:35px;font-weight:normal;color:#000;text-align:center;white-space:pre;position:relative;top:1px;">Aziz &amp; Co.</span></div>
<div style="position:absolute;left:173px;top:1192px;width:1051px;height:35px;display:flex;justify-content:flex-start;align-items:center;box-sizing:border-box;padding:0 5px;"><span style="font-family:'Liberation Sans', sans-serif;font-size:28px;line-height:35px;font-weight:normal;color:#000;text-align:left;white-space:pre;position:relative;top:1px;">Motorized Valve On Bypass Line - OPEN/CLOSE Status</span></div>
<div style="position:absolute;left:1300px;top:1192px;width:213px;height:35px;display:flex;justify-content:center;align-items:center;box-sizing:border-box;padding:0 0px;"><span style="font-family:'Liberation Sans', sans-serif;font-size:28px;line-height:35px;font-weight:normal;color:#000;text-align:center;white-space:pre;position:relative;top:1px;">VFC</span></div>
<div style="position:absolute;left:1513px;top:1192px;width:226px;height:35px;display:flex;justify-content:center;align-items:center;box-sizing:border-box;padding:0 0px;"><span style="font-family:'Liberation Sans', sans-serif;font-size:28px;line-height:35px;font-weight:normal;color:#000;text-align:center;white-space:pre;position:relative;top:1px;">24VDC</span></div>
<div style="position:absolute;left:1739px;top:1192px;width:64px;height:35px;display:flex;justify-content:center;align-items:center;box-sizing:border-box;padding:0 0px;"><span style="font-family:'Liberation Sans', sans-serif;font-size:28px;line-height:35px;font-weight:normal;color:#000;text-align:center;white-space:pre;position:relative;top:1px;">2</span></div>
<div style="position:absolute;left:2288px;top:1192px;width:65px;height:35px;display:flex;justify-content:center;align-items:flex-end;box-sizing:border-box;padding:0 0px;"><span style="font-family:'Liberation Sans', sans-serif;font-size:28px;line-height:35px;font-weight:normal;color:#000;text-align:center;white-space:pre;position:relative;top:1px;top:1.5px;left:1px;">*</span></div>
<div style="position:absolute;left:2418px;top:1192px;width:65px;height:35px;display:flex;justify-content:center;align-items:flex-end;box-sizing:border-box;padding:0 0px;"><span style="font-family:'Liberation Sans', sans-serif;font-size:28px;line-height:35px;font-weight:normal;color:#000;text-align:center;white-space:pre;position:relative;top:1px;top:1.5px;left:1px;">*</span></div>
<div style="position:absolute;left:2483px;top:1192px;width:64px;height:35px;display:flex;justify-content:center;align-items:center;box-sizing:border-box;padding:0 0px;"><span style="font-family:'Liberation Sans', sans-serif;font-size:28px;line-height:35px;font-weight:bold;color:#000;text-align:center;white-space:pre;position:relative;top:1px;">2</span></div>
<div style="position:absolute;left:2547px;top:1192px;width:813px;height:35px;display:flex;justify-content:flex-start;align-items:center;box-sizing:border-box;padding:0 5px;"><span style="font-family:'Liberation Sans', sans-serif;font-size:28px;line-height:35px;font-weight:normal;color:#000;text-align:left;white-space:pre;position:relative;top:1px;">BMS Conformation of Open/Close State</span></div>
<div style="position:absolute;left:3360px;top:1192px;width:353px;height:35px;display:flex;justify-content:center;align-items:center;box-sizing:border-box;padding:0 0px;"><span style="font-family:'Liberation Sans', sans-serif;font-size:28px;line-height:35px;font-weight:normal;color:#000;text-align:center;white-space:pre;position:relative;top:1px;">Aziz &amp; Co.</span></div>
<div style="position:absolute;left:173px;top:1227px;width:1051px;height:35px;display:flex;justify-content:flex-start;align-items:center;box-sizing:border-box;padding:0 5px;"><span style="font-family:'Liberation Sans', sans-serif;font-size:28px;line-height:35px;font-weight:normal;color:#000;text-align:left;white-space:pre;position:relative;top:1px;">Flow Switch On Bypass Line</span></div>
<div style="position:absolute;left:1300px;top:1227px;width:213px;height:35px;display:flex;justify-content:center;align-items:center;box-sizing:border-box;padding:0 0px;"><span style="font-family:'Liberation Sans', sans-serif;font-size:28px;line-height:35px;font-weight:normal;color:#000;text-align:center;white-space:pre;position:relative;top:1px;">VFC</span></div>
<div style="position:absolute;left:1513px;top:1227px;width:226px;height:35px;display:flex;justify-content:center;align-items:center;box-sizing:border-box;padding:0 0px;"><span style="font-family:'Liberation Sans', sans-serif;font-size:28px;line-height:35px;font-weight:normal;color:#000;text-align:center;white-space:pre;position:relative;top:1px;">24VDC</span></div>
<div style="position:absolute;left:1739px;top:1227px;width:64px;height:35px;display:flex;justify-content:center;align-items:center;box-sizing:border-box;padding:0 0px;"><span style="font-family:'Liberation Sans', sans-serif;font-size:28px;line-height:35px;font-weight:normal;color:#000;text-align:center;white-space:pre;position:relative;top:1px;">1</span></div>
<div style="position:absolute;left:2288px;top:1227px;width:65px;height:35px;display:flex;justify-content:center;align-items:flex-end;box-sizing:border-box;padding:0 0px;"><span style="font-family:'Liberation Sans', sans-serif;font-size:28px;line-height:35px;font-weight:normal;color:#000;text-align:center;white-space:pre;position:relative;top:1px;top:1.5px;left:1px;">*</span></div>
<div style="position:absolute;left:2418px;top:1227px;width:65px;height:35px;display:flex;justify-content:center;align-items:flex-end;box-sizing:border-box;padding:0 0px;"><span style="font-family:'Liberation Sans', sans-serif;font-size:28px;line-height:35px;font-weight:normal;color:#000;text-align:center;white-space:pre;position:relative;top:1px;top:1.5px;left:1px;">*</span></div>
<div style="position:absolute;left:2483px;top:1227px;width:64px;height:35px;display:flex;justify-content:center;align-items:center;box-sizing:border-box;padding:0 0px;"><span style="font-family:'Liberation Sans', sans-serif;font-size:28px;line-height:35px;font-weight:bold;color:#000;text-align:center;white-space:pre;position:relative;top:1px;">2</span></div>
<div style="position:absolute;left:2547px;top:1227px;width:813px;height:35px;display:flex;justify-content:flex-start;align-items:center;box-sizing:border-box;padding:0 5px;"><span style="font-family:'Liberation Sans', sans-serif;font-size:28px;line-height:35px;font-weight:normal;color:#000;text-align:left;white-space:pre;position:relative;top:1px;">Conformation of water flow on Bypass Line Chiller</span></div>
<div style="position:absolute;left:3360px;top:1227px;width:353px;height:35px;display:flex;justify-content:center;align-items:center;box-sizing:border-box;padding:0 0px;"><span style="font-family:'Liberation Sans', sans-serif;font-size:28px;line-height:35px;font-weight:normal;color:#000;text-align:center;white-space:pre;position:relative;top:1px;">Aziz &amp; Co.</span></div>
<div style="position:absolute;left:173px;top:1262px;width:1051px;height:54px;display:flex;justify-content:flex-start;align-items:center;box-sizing:border-box;padding:0 5px;"><span style="font-family:'Liberation Sans', sans-serif;font-size:28px;line-height:35px;font-weight:bold;color:#000;text-align:left;white-space:pre;position:relative;top:1px;">IO - PER EQUIPMENT</span></div>
<div style="position:absolute;left:1739px;top:1262px;width:64px;height:54px;display:flex;justify-content:center;align-items:center;box-sizing:border-box;padding:0 0px;"><span style="font-family:'Liberation Sans', sans-serif;font-size:28px;line-height:35px;font-weight:bold;color:#000;text-align:center;white-space:pre;position:relative;top:1px;">18</span></div>
<div style="position:absolute;left:1879px;top:1262px;width:60px;height:54px;display:flex;justify-content:center;align-items:center;box-sizing:border-box;padding:0 0px;"><span style="font-family:'Liberation Sans', sans-serif;font-size:28px;line-height:35px;font-weight:bold;color:#000;text-align:center;white-space:pre;position:relative;top:1px;">6</span></div>
<div style="position:absolute;left:2132px;top:1262px;width:156px;height:54px;display:flex;justify-content:center;align-items:center;box-sizing:border-box;padding:0 0px;"><span style="font-family:'Liberation Sans', sans-serif;font-size:28px;line-height:35px;font-weight:bold;color:#000;text-align:center;white-space:pre;position:relative;top:1px;">13</span></div>
<div style="position:absolute;left:2288px;top:1262px;width:65px;height:54px;display:flex;justify-content:center;align-items:center;box-sizing:border-box;padding:0 0px;"><span style="font-family:'Liberation Sans', sans-serif;font-size:28px;line-height:35px;font-weight:bold;color:#000;text-align:center;white-space:pre;position:relative;top:1px;">15</span></div>
<div style="position:absolute;left:2353px;top:1262px;width:65px;height:54px;display:flex;justify-content:center;align-items:center;box-sizing:border-box;padding:0 0px;"><span style="font-family:'Liberation Sans', sans-serif;font-size:28px;line-height:35px;font-weight:bold;color:#000;text-align:center;white-space:pre;position:relative;top:1px;">4</span></div>
<div style="position:absolute;left:2418px;top:1262px;width:65px;height:54px;display:flex;justify-content:center;align-items:center;box-sizing:border-box;padding:0 0px;"><span style="font-family:'Liberation Sans', sans-serif;font-size:28px;line-height:35px;font-weight:bold;color:#000;text-align:center;white-space:pre;position:relative;top:1px;">18</span></div>
<div style="position:absolute;left:171px;top:1454px;width:1056px;height:40px;background:transparent;border:3px solid #217346;box-sizing:border-box;"></div>
<div style="position:absolute;left:1219px;top:1486px;width:8px;height:8px;background:#217346;border:1px solid #fff;"></div>
<div style="position:absolute;left:3784px;top:82px;width:25px;height:1472px;background:#e6e6e6;"></div>
<div style="position:absolute;left:3784px;top:118px;width:1px;height:1437px;background:#bfbfbf;"></div>
<div style="position:absolute;left:3787px;top:83px;width:22px;height:1472px;background:#dcdcdc;"></div>
<div style="position:absolute;left:3787px;top:83px;width:30px;height:37px;background:#fff;border:1px solid #c6c6c6;box-sizing:border-box;"></div>
<svg style="position:absolute;left:3795px;top:93px" width="20" height="14"><path d="M0 12 L9 2 L18 12 Z" fill="#777"/></svg>
<div style="position:absolute;left:3787px;top:119px;width:30px;height:238px;background:#fff;border:1px solid #c6c6c6;box-sizing:border-box;"></div>
<div style="position:absolute;left:3787px;top:1519px;width:30px;height:36px;background:#fff;border:1px solid #c6c6c6;box-sizing:border-box;"></div>
<svg style="position:absolute;left:3795px;top:1531px" width="20" height="14"><path d="M0 2 L9 12 L18 2 Z" fill="#777"/></svg>
<div style="position:absolute;left:0px;top:1554px;width:3809px;height:47px;background:#e6e6e6;"></div>
<div style="position:absolute;left:0px;top:1554px;width:3809px;height:1px;background:#c6c6c6;"></div>
<svg style="position:absolute;left:20px;top:1566px" width="16" height="22"><path d="M12 3 L3.5 10.5 L12 18 Z" fill="#1e6b3c"/></svg>
<svg style="position:absolute;left:67px;top:1566px" width="16" height="22"><path d="M3 3 L11.5 10.5 L3 18 Z" fill="#1e6b3c"/></svg>
<div style="position:absolute;left:108px;top:1556px;font-family:'Liberation Sans', sans-serif;font-size:30px;line-height:40px;color:#217346;font-weight:bold;letter-spacing:1px">...</div>
<div style="position:absolute;left:145px;top:1558px;width:1px;height:39px;background:#b4b4b4;"></div>
<div style="position:absolute;left:147px;top:1557px;width:94px;height:41px;background:#0070c0;"></div>
<div style="position:absolute;left:147px;top:1557px;width:94px;height:40px;text-align:center;font-family:'Liberation Sans', sans-serif;font-size:29.8px;line-height:40px;color:#fff;white-space:nowrap;overflow:hidden">MFM</div>
<div style="position:absolute;left:243px;top:1558px;width:1px;height:39px;background:#b4b4b4;"></div>
<div style="position:absolute;left:246px;top:1557px;width:239px;height:41px;background:#0070c0;"></div>
<div style="position:absolute;left:246px;top:1557px;width:239px;height:40px;text-align:center;font-family:'Liberation Sans', sans-serif;font-size:28.6px;line-height:40px;color:#fff;white-space:nowrap;overflow:hidden">CHILLAR-Water</div>
<div style="position:absolute;left:488px;top:1554px;width:211px;height:45px;background:#fff;border:1px solid #a6a6a6;border-bottom:none;box-sizing:border-box;"></div>
<div style="position:absolute;left:491px;top:1558px;width:206px;height:37px;background:linear-gradient(#ffffff 0%, #f4f8fc 20%, #9cc3e6 100%);"></div>
<div style="position:absolute;left:488px;top:1596px;width:211px;height:3px;background:#1d6b3e;"></div>
<div style="position:absolute;left:488px;top:1555.5px;width:210px;height:40px;text-align:center;font-family:'Liberation Sans', sans-serif;font-size:29px;line-height:40px;color:#217346;font-weight:bold;white-space:nowrap;overflow:hidden">CHILLAR-AIR</div>
<div style="position:absolute;left:699px;top:1558px;width:1px;height:39px;background:#b4b4b4;"></div>
<div style="position:absolute;left:701px;top:1557px;width:268px;height:41px;background:#0070c0;"></div>
<div style="position:absolute;left:701px;top:1557px;width:268px;height:40px;text-align:center;font-family:'Liberation Sans', sans-serif;font-size:27.9px;line-height:40px;color:#fff;white-space:nowrap;overflow:hidden">COOLING TOWER</div>
<div style="position:absolute;left:972px;top:1558px;width:1px;height:39px;background:#b4b4b4;"></div>
<div style="position:absolute;left:975px;top:1557px;width:438px;height:41px;background:#4472c4;"></div>
<div style="position:absolute;left:975px;top:1557px;width:438px;height:40px;text-align:center;font-family:'Liberation Sans', sans-serif;font-size:29.5px;line-height:40px;color:#fff;white-space:nowrap;overflow:hidden">Primary and Condenser Pump</div>
<div style="position:absolute;left:1415px;top:1558px;width:1px;height:39px;background:#b4b4b4;"></div>
<div style="position:absolute;left:1417px;top:1557px;width:255px;height:41px;background:#4472c4;"></div>
<div style="position:absolute;left:1417px;top:1557px;width:255px;height:40px;text-align:center;font-family:'Liberation Sans', sans-serif;font-size:29.6px;line-height:40px;color:#fff;white-space:nowrap;overflow:hidden">Secondery Pump</div>
<div style="position:absolute;left:1674px;top:1558px;width:1px;height:39px;background:#b4b4b4;"></div>
<div style="position:absolute;left:1677px;top:1557px;width:139px;height:41px;background:#4472c4;"></div>
<div style="position:absolute;left:1677px;top:1557px;width:139px;height:40px;text-align:center;font-family:'Liberation Sans', sans-serif;font-size:29.2px;line-height:40px;color:#fff;white-space:nowrap;overflow:hidden">FM AHU</div>
<div style="position:absolute;left:1818px;top:1558px;width:1px;height:39px;background:#b4b4b4;"></div>
<div style="position:absolute;left:1820px;top:1557px;width:74px;height:41px;background:#4472c4;"></div>
<div style="position:absolute;left:1820px;top:1557px;width:74px;height:40px;text-align:center;font-family:'Liberation Sans', sans-serif;font-size:27.8px;line-height:40px;color:#fff;white-space:nowrap;overflow:hidden">TFA</div>
<div style="position:absolute;left:1896px;top:1558px;width:1px;height:39px;background:#b4b4b4;"></div>
<div style="position:absolute;left:1899px;top:1557px;width:129px;height:41px;background:#4472c4;"></div>
<div style="position:absolute;left:1899px;top:1557px;width:129px;height:40px;text-align:center;font-family:'Liberation Sans', sans-serif;font-size:28px;line-height:40px;color:#fff;white-space:nowrap;overflow:hidden">CS AHU</div>
<div style="position:absolute;left:2030px;top:1558px;width:1px;height:39px;background:#b4b4b4;"></div>
<div style="position:absolute;left:2033px;top:1557px;width:76px;height:41px;background:#4472c4;"></div>
<div style="position:absolute;left:2033px;top:1557px;width:76px;height:40px;text-align:center;font-family:'Liberation Sans', sans-serif;font-size:27px;line-height:40px;color:#fff;white-space:nowrap;overflow:hidden">FCU</div>
<div style="position:absolute;left:2111px;top:1558px;width:1px;height:39px;background:#b4b4b4;"></div>
<div style="position:absolute;left:2114px;top:1557px;width:249px;height:41px;background:#4472c4;"></div>
<div style="position:absolute;left:2114px;top:1557px;width:249px;height:40px;text-align:center;font-family:'Liberation Sans', sans-serif;font-size:29.3px;line-height:40px;color:#fff;white-space:nowrap;overflow:hidden">VRV ODU &amp; IDU</div>
<div style="position:absolute;left:2365px;top:1558px;width:1px;height:39px;background:#b4b4b4;"></div>
<div style="position:absolute;left:2368px;top:1557px;width:136px;height:41px;background:#0070c0;"></div>
<div style="position:absolute;left:2368px;top:1557px;width:136px;height:40px;text-align:center;font-family:'Liberation Sans', sans-serif;font-size:25.2px;line-height:40px;color:#fff;white-space:nowrap;overflow:hidden">ETP_STP</div>
<div style="position:absolute;left:2506px;top:1558px;width:1px;height:39px;background:#b4b4b4;"></div>
<div style="position:absolute;left:2509px;top:1557px;width:216px;height:41px;background:#0070c0;"></div>
<div style="position:absolute;left:2509px;top:1557px;width:216px;height:40px;text-align:center;font-family:'Liberation Sans', sans-serif;font-size:29.3px;line-height:40px;color:#fff;white-space:nowrap;overflow:hidden">Pump (Water)</div>
<div style="position:absolute;left:2727px;top:1558px;width:1px;height:39px;background:#b4b4b4;"></div>
<div style="position:absolute;left:2730px;top:1557px;width:197px;height:41px;background:#0070c0;"></div>
<div style="position:absolute;left:2730px;top:1557px;width:197px;height:40px;text-align:left;padding-left:19px;box-sizing:border-box;font-family:'Liberation Sans', sans-serif;font-size:28.6px;line-height:40px;color:#fff;white-space:nowrap;overflow:hidden">Water Level B</div>
<div style="position:absolute;left:2936px;top:1556px;font-family:'Liberation Sans', sans-serif;font-size:30px;line-height:40px;color:#217346;font-weight:bold;letter-spacing:1px">...</div>
<svg style="position:absolute;left:2979px;top:1559px" width="36" height="36"><circle cx="18" cy="18" r="15" fill="none" stroke="#6e6e6e" stroke-width="2.5"/><path d="M18 10 V26 M10 18 H26" stroke="#6e6e6e" stroke-width="3.6"/></svg>
<div style="position:absolute;left:3042px;top:1566px;width:5px;height:5px;background:#a6a6a6;"></div>
<div style="position:absolute;left:3042px;top:1575px;width:5px;height:5px;background:#a6a6a6;"></div>
<div style="position:absolute;left:3042px;top:1584px;width:5px;height:5px;background:#a6a6a6;"></div>
<div style="position:absolute;left:3069px;top:1559px;width:716px;height:37px;background:#dcdcdc;"></div>
<div style="position:absolute;left:3069px;top:1559px;width:36px;height:37px;background:#fff;border:1px solid #c6c6c6;box-sizing:border-box;"></div>
<svg style="position:absolute;left:3080px;top:1568px" width="14" height="20"><path d="M11 1 L2 9 L11 17 Z" fill="#777"/></svg>
<div style="position:absolute;left:3106px;top:1559px;width:344px;height:37px;background:#fff;border:1px solid #c6c6c6;box-sizing:border-box;"></div>
<div style="position:absolute;left:3749px;top:1559px;width:36px;height:37px;background:#fff;border:1px solid #c6c6c6;box-sizing:border-box;"></div>
<svg style="position:absolute;left:3762px;top:1568px" width="14" height="20"><path d="M2 1 L11 9 L2 17 Z" fill="#777"/></svg>
<div style="position:absolute;left:0px;top:1601px;width:3809px;height:1px;background:#c8c8c8;"></div>
<div style="position:absolute;left:0px;top:1602px;width:3809px;height:63px;background:#f0f0f0;"></div>
<div style="position:absolute;left:2px;top:1619px;font-family:'Liberation Sans', sans-serif;font-size:22px;line-height:40px;color:#444;">Ready</div>
<div style="position:absolute;left:93px;top:1619px;font-family:'Liberation Sans', sans-serif;font-size:23px;line-height:40px;color:#444;">Circular References</div>
<div style="position:absolute;left:3243px;top:1601px;width:71px;height:64px;background:#c6c6c6;"></div>
<svg style="position:absolute;left:3262px;top:1621px" width="34" height="34"><g stroke="#707070" stroke-width="1.4" fill="none"><rect x="1.7" y="1.7" width="30.5" height="30.5"/><path d="M11.9 1.7 V32.2 M22 1.7 V32.2 M1.7 11.9 H32.2 M1.7 22 H32.2"/></g></svg>
<svg style="position:absolute;left:3332px;top:1621px" width="36" height="34"><g stroke="#707070" stroke-width="1.4" fill="none"><rect x="1.5" y="1.5" width="33" height="29.5"/><rect x="9.5" y="5.5" width="17" height="21"/><path d="M13 9 H23 M13 12.8 H23 M13 16.8 H23 M13 21 H23"/></g></svg>
<svg style="position:absolute;left:3402px;top:1620px" width="36" height="34"><g stroke="#707070" stroke-width="1.4" fill="none"><rect x="1.5" y="1.5" width="33" height="31"/><path d="M1.5 20 H21.5 V1.5 M11.3 1.5 V20"/></g></svg>
<div style="position:absolute;left:3465px;top:1635px;width:14px;height:4px;background:#707070;"></div>
<div style="position:absolute;left:3489px;top:1636px;width:223px;height:2px;background:#a6a6a6;"></div>
<div style="position:absolute;left:3578px;top:1624px;width:9px;height:25px;background:#6e6e6e;"></div>
<div style="position:absolute;left:3600px;top:1630px;width:2px;height:14px;background:#a6a6a6;"></div>
<div style="position:absolute;left:3722px;top:1635px;width:18px;height:4px;background:#707070;"></div>
<div style="position:absolute;left:3729px;top:1628px;width:4px;height:18px;background:#707070;"></div>
<div style="position:absolute;left:3767px;top:1618px;font-family:'Liberation Sans', sans-serif;font-size:26px;line-height:40px;color:#444;white-space:nowrap">85%</div>
</body></html>
